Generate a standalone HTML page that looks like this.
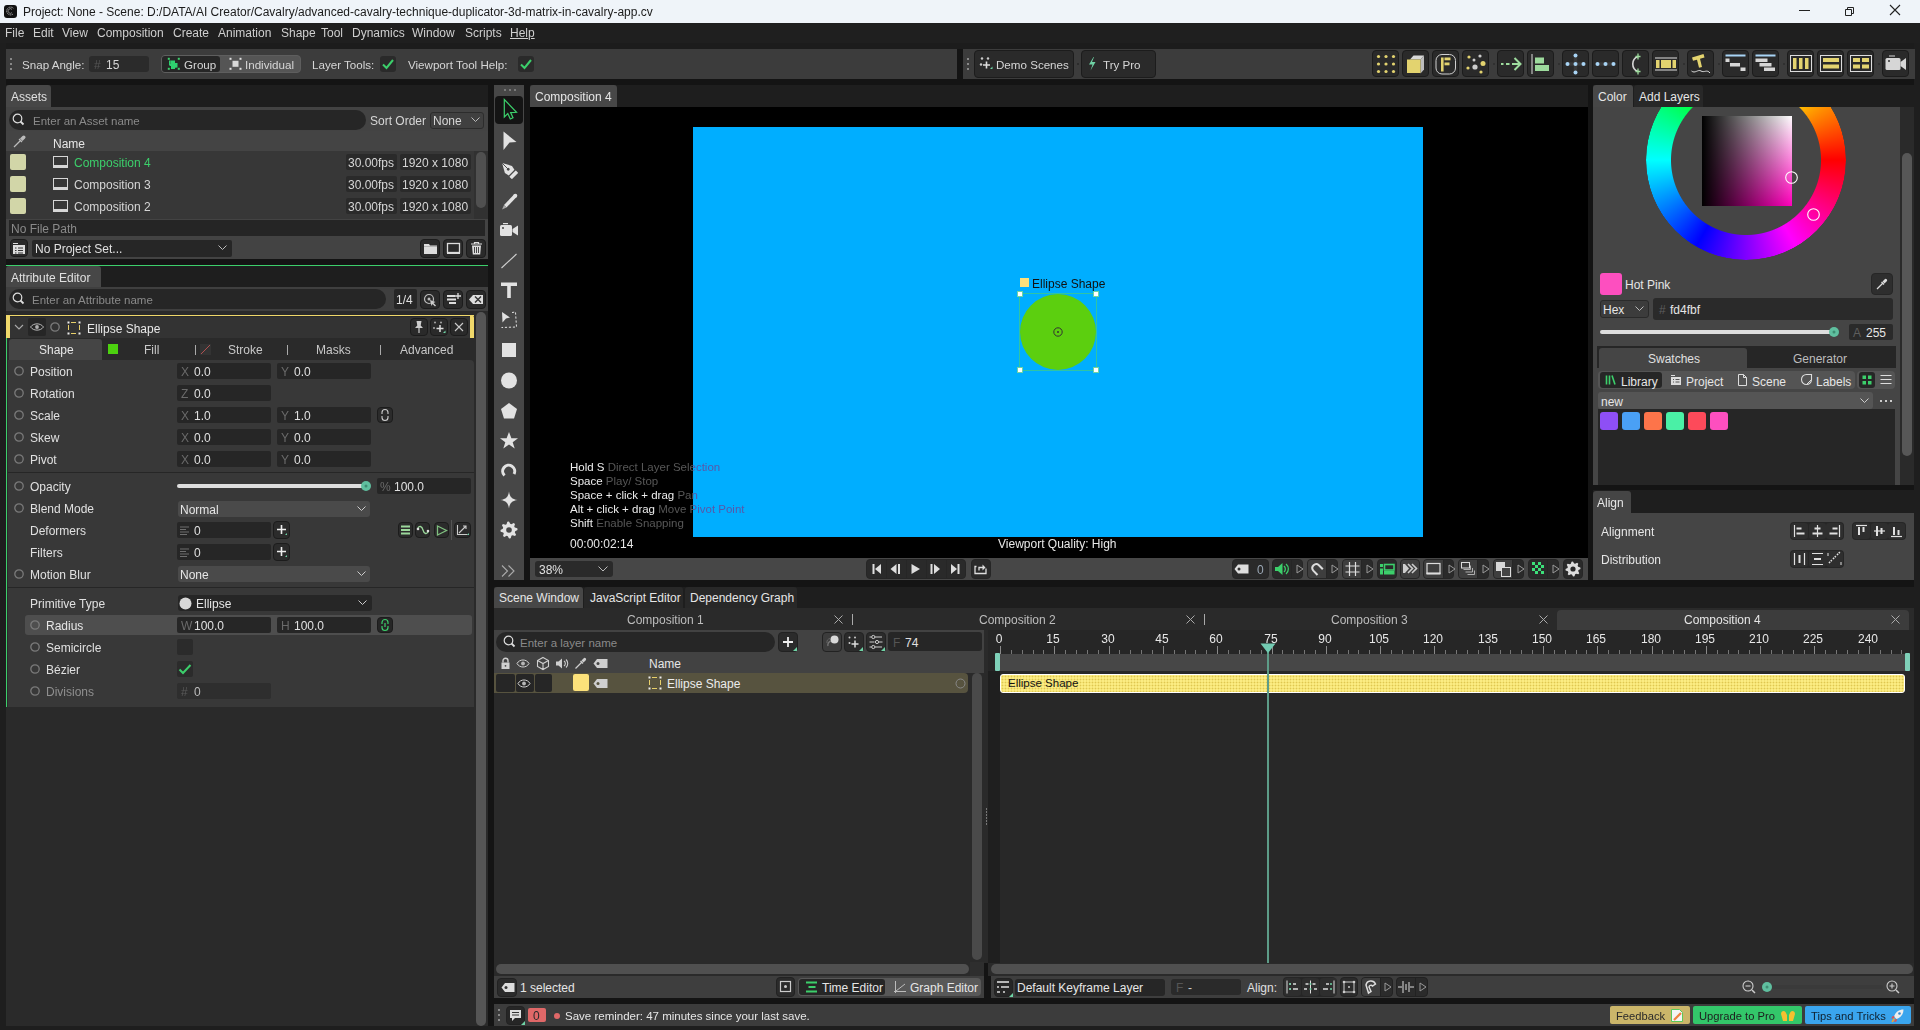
<!DOCTYPE html>
<html><head><meta charset="utf-8">
<style>
*{box-sizing:border-box;margin:0;padding:0}
html,body{width:1920px;height:1030px;overflow:hidden;background:#141414;font-family:"Liberation Sans",sans-serif;font-size:12px;color:#d6d6d6}
.a{position:absolute}
.t{position:absolute;white-space:nowrap;line-height:14px;margin-top:1px}
.fld{position:absolute;background:#262626;border-radius:3px}
.btn{position:absolute;background:#2a2a2a;border:1px solid #1c1c1c;border-radius:4px}
svg{position:absolute;overflow:visible}
</style></head><body>

<!-- TITLE BAR -->
<div class="a" style="left:0;top:0;width:1920px;height:23px;background:#eff4f9"></div>
<div class="a" style="left:3.5px;top:4.5px;width:13px;height:13px;background:#111;border-radius:3px"></div>
<svg style="left:4px;top:5px" width="12" height="12"><path d="M9.3 3.2 A3.9 3.9 0 1 0 9.3 8.8" fill="none" stroke="#bbb" stroke-width="0.9" stroke-dasharray="1.2 0.6"/><path d="M8 4.4 A2.3 2.3 0 1 0 8 7.6" fill="none" stroke="#999" stroke-width="0.8"/></svg>
<div class="t" style="left:23px;top:4px;color:#1b1b1b;font-size:12px">Project: None - Scene: D:/DATA/AI Creator/Cavalry/advanced-cavalry-technique-duplicator-3d-matrix-in-cavalry-app.cv</div>
<div class="a" style="left:1799px;top:10px;width:11px;height:1px;background:#222"></div>
<svg style="left:1843px;top:5px" width="12" height="12"><path d="M2.5 4.5h6v6h-6z M4.5 4.5v-2h6v6h-2" fill="none" stroke="#222" stroke-width="1"/></svg>
<svg style="left:1889px;top:4px" width="12" height="12"><path d="M1 1L11 11M11 1L1 11" stroke="#222" stroke-width="1.1"/></svg>

<!-- MENU BAR -->
<!-- SIDESTRIPS --><div class="a" style="left:0;top:1026px;width:1920px;height:4px;background:#1e1e1e"></div><div class="a" style="left:0;top:43px;width:1920px;height:6px;background:#1c1c1c"></div><div class="a" style="left:0;top:43px;width:6px;height:987px;background:#1e1e1e"></div><div class="a" style="left:1914px;top:43px;width:6px;height:987px;background:#1e1e1e"></div>
<div class="a" style="left:0;top:23px;width:1920px;height:20px;background:#1f1f1f"></div>
<div class="t" style="top:25px;left:5px;color:#cfcfcf">File</div>
<div class="t" style="top:25px;left:33px;color:#cfcfcf">Edit</div>
<div class="t" style="top:25px;left:62px;color:#cfcfcf">View</div>
<div class="t" style="top:25px;left:97px;color:#cfcfcf">Composition</div>
<div class="t" style="top:25px;left:173px;color:#cfcfcf">Create</div>
<div class="t" style="top:25px;left:218px;color:#cfcfcf">Animation</div>
<div class="t" style="top:25px;left:281px;color:#cfcfcf">Shape</div>
<div class="t" style="top:25px;left:321px;color:#cfcfcf">Tool</div>
<div class="t" style="top:25px;left:352px;color:#cfcfcf">Dynamics</div>
<div class="t" style="top:25px;left:412px;color:#cfcfcf">Window</div>
<div class="t" style="top:25px;left:465px;color:#cfcfcf">Scripts</div>
<div class="t" style="top:25px;left:510px;color:#cfcfcf;text-decoration:underline">Help</div>

<!-- TOOLBAR 1 -->
<div class="a" style="left:6px;top:49px;width:951px;height:30px;background:#3c3c3c"></div>
<div class="a" style="left:10px;top:58px;width:2px;height:2px;background:#888"></div>
<div class="a" style="left:10px;top:63px;width:2px;height:2px;background:#888"></div>
<div class="a" style="left:10px;top:68px;width:2px;height:2px;background:#888"></div>
<div class="t" style="left:22px;top:57px;font-size:11.6px">Snap Angle:</div>
<div class="fld" style="left:89px;top:56px;width:60px;height:16px;background:#2b2b2b"></div>
<div class="t" style="left:94px;top:57px;color:#555">#</div>
<div class="t" style="left:106px;top:57px">15</div>
<div class="a" style="left:161px;top:55px;width:140px;height:18px;background:#555555;border-radius:4px;border:1px solid #5e5e5e"></div>
<div class="a" style="left:162px;top:56px;width:58px;height:16px;background:#262626;border-radius:3px"></div>
<svg style="left:166px;top:56px" width="16" height="16"><rect x="1.8" y="1.8" width="2" height="2" fill="#3ccf6b"/><rect x="11.8" y="1.8" width="2" height="2" fill="#3ccf6b"/><rect x="1.8" y="11.8" width="2" height="2" fill="#3ccf6b"/><rect x="11.8" y="11.8" width="2" height="2" fill="#3ccf6b"/><path d="M4.5 4.5h4.5v2.5h1.5v4.5h-1.5v1.5h-4v-3h-1.5v-2h1z" fill="#2fd070"/><path d="M3 4.5h1.5v4.5h-1.5z M9 7h2.5v4.5H9z" fill="#2fd070"/></svg>
<div class="t" style="left:184px;top:57px;font-size:11.6px">Group</div>
<svg style="left:228px;top:56px" width="16" height="16"><rect x="1.5" y="1.8" width="2" height="2" fill="#e0e0e0"/><rect x="11.5" y="1.8" width="2" height="2" fill="#e0e0e0"/><rect x="1.5" y="11.8" width="2" height="2" fill="#e0e0e0"/><rect x="11.5" y="11.8" width="2" height="2" fill="#e0e0e0"/><rect x="4.5" y="4.8" width="6" height="6" fill="#d8d8d8"/></svg>
<div class="t" style="left:245px;top:57px;font-size:11.6px">Individual</div>
<div class="t" style="left:312px;top:57px;font-size:11.6px">Layer Tools:</div>
<div class="a" style="left:380px;top:56px;width:16px;height:16px;background:#2a2a2a;border-radius:3px"></div>
<svg style="left:380px;top:56px" width="16" height="16"><path d="M3 8.5L6.5 12L13 4" fill="none" stroke="#3ccf6b" stroke-width="2"/></svg>
<div class="t" style="left:408px;top:57px;font-size:11.6px">Viewport Tool Help:</div>
<div class="a" style="left:518px;top:56px;width:16px;height:16px;background:#2a2a2a;border-radius:3px"></div>
<svg style="left:518px;top:56px" width="16" height="16"><path d="M3 8.5L6.5 12L13 4" fill="none" stroke="#3ccf6b" stroke-width="2"/></svg>

<!-- TOOLBAR 2 -->
<div class="a" style="left:963px;top:49px;width:952px;height:30px;background:#3c3c3c"></div>
<div class="btn" style="left:1372px;top:50px;width:27px;height:27px"></div><svg style="left:1372px;top:50px" width="27" height="27"><circle cx="6.5" cy="6.5" r="1.6" fill="#e3d36f"/><circle cx="6.5" cy="14" r="1.6" fill="#e3d36f"/><circle cx="6.5" cy="21.5" r="1.6" fill="#e3d36f"/><circle cx="14" cy="6.5" r="1.6" fill="#e3d36f"/><circle cx="14" cy="14" r="1.6" fill="#e3d36f"/><circle cx="14" cy="21.5" r="1.6" fill="#e3d36f"/><circle cx="21.5" cy="6.5" r="1.6" fill="#e3d36f"/><circle cx="21.5" cy="14" r="1.6" fill="#e3d36f"/><circle cx="21.5" cy="21.5" r="1.6" fill="#e3d36f"/></svg>
<div class="btn" style="left:1402px;top:50px;width:27px;height:27px"></div><svg style="left:1402px;top:50px" width="27" height="27"><path d="M8 9.5 L11.5 5.5 L22 5.5 L18.5 9.5Z" fill="#d8d8d8"/><path d="M18.5 9.5 L22 5.5 L22 19.5 L18.5 23.5Z" fill="#bdbdbd"/><rect x="5" y="9.5" width="13.5" height="13.5" fill="#e3d36f"/></svg>
<div class="btn" style="left:1432px;top:50px;width:27px;height:27px"></div><svg style="left:1432px;top:50px" width="27" height="27"><rect x="4" y="4.5" width="19.5" height="19.5" rx="6" fill="none" stroke="#d0d0d0" stroke-width="1"/><rect x="9" y="7.5" width="2.6" height="14" fill="#e3d36f"/><rect x="12.5" y="7.5" width="6" height="2.8" fill="#e3d36f"/><rect x="12.5" y="12.5" width="5" height="2.8" fill="#e3d36f"/></svg>
<div class="btn" style="left:1462px;top:50px;width:27px;height:27px"></div><svg style="left:1462px;top:50px" width="27" height="27"><circle cx="7" cy="7" r="1.6" fill="#e3d36f"/><circle cx="18" cy="6" r="1.6" fill="#ccc"/><circle cx="12" cy="10" r="1.5" fill="#ccc"/><circle cx="21" cy="13.5" r="2.5" fill="#e3d36f"/><circle cx="13" cy="17" r="2.6" fill="#ccc"/><circle cx="6" cy="18" r="1.6" fill="#e3d36f"/><circle cx="19" cy="22" r="1.6" fill="#e3d36f"/></svg>
<div class="btn" style="left:1497px;top:50px;width:27px;height:27px"></div><svg style="left:1497px;top:50px" width="27" height="27"><path d="M4 14h2.5 M9 14h3.5 M15 14h8" stroke="#9ddb9d" stroke-width="2"/><path d="M17.5 8 L23.5 14 L17.5 20" fill="none" stroke="#9ddb9d" stroke-width="2"/></svg>
<div class="btn" style="left:1527px;top:50px;width:27px;height:27px"></div><svg style="left:1527px;top:50px" width="27" height="27"><rect x="4.5" y="4" width="1" height="20" fill="#ddd"/><rect x="8" y="7.5" width="9" height="6" fill="#9ddb9d"/><rect x="8" y="15" width="14" height="6" fill="#9ddb9d"/></svg>
<div class="btn" style="left:1562px;top:50px;width:27px;height:27px"></div><svg style="left:1562px;top:50px" width="27" height="27"><path d="M13.5 6 V22 M5.5 14 H21.5" stroke="#3a3a3a" stroke-width="3.5"/><circle cx="13.5" cy="5.5" r="2" fill="#a8d4f5"/><circle cx="5.5" cy="14" r="2" fill="#a8d4f5"/><circle cx="13.5" cy="14" r="2" fill="#a8d4f5"/><circle cx="21.5" cy="14" r="2" fill="#a8d4f5"/><circle cx="13.5" cy="22.5" r="2" fill="#a8d4f5"/></svg>
<div class="btn" style="left:1592px;top:50px;width:27px;height:27px"></div><svg style="left:1592px;top:50px" width="27" height="27"><path d="M5.5 14 H21.5" stroke="#3a3a3a" stroke-width="3.5"/><circle cx="5.5" cy="14" r="2" fill="#a8d4f5"/><circle cx="13.5" cy="14" r="2" fill="#a8d4f5"/><circle cx="21.5" cy="14" r="2" fill="#a8d4f5"/></svg>
<div class="btn" style="left:1622px;top:50px;width:27px;height:27px"></div><svg style="left:1622px;top:50px" width="27" height="27"><path d="M16 6.5 A8 8 0 0 0 16 21.5" fill="none" stroke="#d6d6d6" stroke-width="1.6"/><path d="M16 3.5v6 M13.5 6.5h5 M16 18.5v6 M13.5 21.5h5" stroke="#9ddb9d" stroke-width="1.3"/></svg>
<div class="btn" style="left:1652px;top:50px;width:27px;height:27px"></div><svg style="left:1652px;top:50px" width="27" height="27"><rect x="3" y="7.5" width="22" height="1" fill="#ddd"/><rect x="3" y="19.5" width="22" height="1" fill="#ddd"/><rect x="4" y="10" width="3.5" height="8" fill="#e3d36f"/><rect x="9" y="10" width="10" height="8" fill="#e3d36f"/><rect x="20.5" y="10" width="3.5" height="8" fill="#e3d36f"/></svg>
<div class="btn" style="left:1687px;top:50px;width:27px;height:27px"></div><svg style="left:1687px;top:50px" width="27" height="27"><path d="M5 7.5 L16.5 4 L17.5 7.5 L13 8.8 L15 17 L12 17.8 L10 9.7 L6 10.8Z" fill="#e3d36f"/><path d="M4.5 21 C8 24 11 19 14 21 S20 19 23 23" fill="none" stroke="#ddd" stroke-width="1"/></svg>
<div class="btn" style="left:1722px;top:50px;width:27px;height:27px"></div><svg style="left:1722px;top:50px" width="27" height="27"><rect x="3.5" y="4.5" width="20" height="2" fill="#a8d4f5"/><rect x="3.5" y="8.5" width="4" height="3.5" fill="#d6d6d6"/><rect x="8" y="13" width="10" height="3.5" fill="#d6d6d6"/><rect x="18.5" y="17.5" width="5" height="3.5" fill="#d6d6d6"/></svg>
<div class="btn" style="left:1752px;top:50px;width:27px;height:27px"></div><svg style="left:1752px;top:50px" width="27" height="27"><rect x="3.5" y="4.5" width="20" height="2" fill="#a8d4f5"/><rect x="3.5" y="8.5" width="12" height="3.5" fill="#d6d6d6"/><rect x="7.5" y="13" width="12" height="3.5" fill="#d6d6d6"/><rect x="12" y="17.5" width="11" height="3.5" fill="#d6d6d6"/></svg>
<div class="btn" style="left:1787px;top:50px;width:27px;height:27px"></div><svg style="left:1787px;top:50px" width="27" height="27"><rect x="3.5" y="5.5" width="21" height="16" fill="none" stroke="#ddd" stroke-width="1"/><rect x="6" y="8" width="3.5" height="11" fill="#e3d36f"/><rect x="12" y="8" width="3.5" height="11" fill="#e3d36f"/><rect x="18" y="8" width="3.5" height="11" fill="#e3d36f"/></svg>
<div class="btn" style="left:1817px;top:50px;width:27px;height:27px"></div><svg style="left:1817px;top:50px" width="27" height="27"><rect x="3.5" y="5.5" width="21" height="16" fill="none" stroke="#ddd" stroke-width="1"/><rect x="6" y="8" width="16" height="4" fill="#e3d36f"/><rect x="6" y="14.5" width="16" height="4" fill="#e3d36f"/></svg>
<div class="btn" style="left:1847px;top:50px;width:27px;height:27px"></div><svg style="left:1847px;top:50px" width="27" height="27"><rect x="3.5" y="5.5" width="21" height="16" fill="none" stroke="#ddd" stroke-width="1"/><rect x="6" y="8" width="7" height="4" fill="#e3d36f"/><rect x="15" y="8" width="7" height="4" fill="#e3d36f"/><rect x="6" y="14.5" width="7" height="4" fill="#e3d36f"/><rect x="15" y="14.5" width="7" height="4" fill="#e3d36f"/></svg>
<div class="btn" style="left:1882px;top:50px;width:27px;height:27px"></div><svg style="left:1882px;top:50px" width="27" height="27"><rect x="7" y="5.5" width="6" height="1" fill="#d6d6d6"/><rect x="3.5" y="8" width="15" height="12" rx="1.5" fill="#d6d6d6"/><circle cx="7" cy="11" r="1" fill="#333"/><path d="M18.5 12 L24 8 L24 20 L18.5 16Z" fill="#d6d6d6"/></svg>
<div class="a" style="left:1493px;top:63px;width:2px;height:2px;border-radius:1px;background:#2c2c2c"></div>
<div class="a" style="left:1558px;top:63px;width:2px;height:2px;border-radius:1px;background:#2c2c2c"></div>
<div class="a" style="left:1683px;top:63px;width:2px;height:2px;border-radius:1px;background:#2c2c2c"></div>
<div class="a" style="left:1718px;top:63px;width:2px;height:2px;border-radius:1px;background:#2c2c2c"></div>
<div class="a" style="left:1783px;top:63px;width:2px;height:2px;border-radius:1px;background:#2c2c2c"></div>
<div class="a" style="left:1878px;top:63px;width:2px;height:2px;border-radius:1px;background:#2c2c2c"></div>
<div class="a" style="left:967px;top:58px;width:2px;height:2px;background:#888"></div><div class="a" style="left:967px;top:63px;width:2px;height:2px;background:#888"></div><div class="a" style="left:967px;top:68px;width:2px;height:2px;background:#888"></div>
<div class="btn" style="left:974px;top:50px;width:100px;height:28px"></div>
<svg style="left:979px;top:56px" width="16" height="16"><circle cx="3" cy="2.5" r="1.2" fill="#ccc"/><circle cx="9" cy="2.5" r="1.2" fill="#ccc"/><circle cx="2" cy="8.5" r="1.2" fill="#ccc"/><path d="M7.5 5.5v7 M4 9h7" stroke="#ddd" stroke-width="1.6"/><path d="M11 13h2.5v-2.5z" fill="#6fd3a5"/></svg>
<div class="t" style="left:996px;top:57px;font-size:11.6px">Demo Scenes</div>
<div class="a" style="left:1077px;top:63px;width:2px;height:2px;background:#2c2c2c"></div>
<div class="btn" style="left:1081px;top:50px;width:75px;height:28px"></div>
<svg style="left:1087px;top:56px" width="12" height="16"><path d="M6.5 1 L2 8.5 L5.5 8.5 L3.5 14.5 L8.5 6 L5 6 L7 1Z" fill="#6fd3a5"/></svg>
<div class="t" style="left:1103px;top:57px;font-size:11.6px">Try Pro</div>



<!-- ASSETS PANEL -->
<div class="a" style="left:6px;top:85px;width:482px;height:22px;background:#1e1e1e"></div>
<div class="a" style="left:6px;top:85px;width:45px;height:22px;background:#474747;border-radius:3px 3px 0 0"></div>
<div class="t" style="left:11px;top:89px;color:#e0e0e0">Assets</div>
<div class="a" style="left:6px;top:107px;width:482px;height:152px;background:#434343"></div>
<div class="a" style="left:9px;top:110px;width:357px;height:20px;background:#262626;border-radius:10px"></div>
<svg style="left:12px;top:113px" width="14" height="14"><circle cx="5.5" cy="5.5" r="4.3" fill="none" stroke="#ddd" stroke-width="1.2"/><path d="M8.5 8.5L11.5 11.5" stroke="#ddd" stroke-width="1.8"/></svg>
<div class="t" style="left:33px;top:113px;color:#8a8a8a;font-size:11.5px">Enter an Asset name</div>
<div class="t" style="left:370px;top:113px;color:#d6d6d6">Sort Order</div>
<div class="a" style="left:430px;top:112px;width:54px;height:17px;background:#404040;border:1px solid #2c2c2c;border-radius:3px"></div>
<div class="t" style="left:433px;top:113px;color:#d6d6d6">None</div>
<svg style="left:471px;top:117px" width="9" height="6"><path d="M0.5 0.5L4.5 4.5L8.5 0.5" fill="none" stroke="#bbb" stroke-width="1"/></svg>
<div class="a" style="left:6px;top:131px;width:482px;height:20px;background:#444444"></div>
<svg style="left:13px;top:135px" width="13" height="13"><path d="M1 12L8 5" stroke="#bbb" stroke-width="1.3"/><path d="M7 3.5L9.5 1 A1.6 1.6 0 0 1 12 3.5L9.5 6Z" fill="#bbb"/><path d="M6 4L9 7" stroke="#bbb" stroke-width="1.3"/></svg>
<div class="t" style="left:53px;top:136px;color:#e6e6e6">Name</div>
<div class="a" style="left:6px;top:151px;width:482px;height:68px;background:#373737"></div>
<div class="a" style="left:474px;top:151px;width:14px;height:68px;background:#313131"></div>
<div class="a" style="left:476px;top:152px;width:10px;height:56px;background:#505050;border-radius:5px"></div>

<div class="a" style="left:10px;top:154px;width:16px;height:16px;background:#d2d6a8;border-radius:2px"></div>
<svg style="left:53px;top:156px" width="15" height="12"><rect x="0.5" y="0.5" width="14" height="10" fill="none" stroke="#d6d6d6" stroke-width="1"/><rect x="0" y="9" width="15" height="3" fill="#d6d6d6"/></svg>
<div class="t" style="left:74px;top:155px;color:#3ccf6b">Composition 4</div>
<div class="a" style="left:346px;top:154px;width:51px;height:16px;background:#2a2a2a;border-radius:2px"></div>
<div class="t" style="left:348px;top:155px">30.00fps</div>
<div class="a" style="left:400px;top:154px;width:71px;height:16px;background:#2a2a2a;border-radius:2px"></div>
<div class="t" style="left:402px;top:155px">1920 x 1080</div>

<div class="a" style="left:10px;top:176px;width:16px;height:16px;background:#d2d6a8;border-radius:2px"></div>
<svg style="left:53px;top:178px" width="15" height="12"><rect x="0.5" y="0.5" width="14" height="10" fill="none" stroke="#d6d6d6" stroke-width="1"/><rect x="0" y="9" width="15" height="3" fill="#d6d6d6"/></svg>
<div class="t" style="left:74px;top:177px">Composition 3</div>
<div class="a" style="left:346px;top:176px;width:51px;height:16px;background:#2a2a2a;border-radius:2px"></div>
<div class="t" style="left:348px;top:177px">30.00fps</div>
<div class="a" style="left:400px;top:176px;width:71px;height:16px;background:#2a2a2a;border-radius:2px"></div>
<div class="t" style="left:402px;top:177px">1920 x 1080</div>

<div class="a" style="left:10px;top:198px;width:16px;height:16px;background:#d2d6a8;border-radius:2px"></div>
<svg style="left:53px;top:200px" width="15" height="12"><rect x="0.5" y="0.5" width="14" height="10" fill="none" stroke="#d6d6d6" stroke-width="1"/><rect x="0" y="9" width="15" height="3" fill="#d6d6d6"/></svg>
<div class="t" style="left:74px;top:199px">Composition 2</div>
<div class="a" style="left:346px;top:198px;width:51px;height:16px;background:#2a2a2a;border-radius:2px"></div>
<div class="t" style="left:348px;top:199px">30.00fps</div>
<div class="a" style="left:400px;top:198px;width:71px;height:16px;background:#2a2a2a;border-radius:2px"></div>
<div class="t" style="left:402px;top:199px">1920 x 1080</div>

<div class="a" style="left:9px;top:220px;width:476px;height:16px;background:#252525"></div>
<div class="t" style="left:11px;top:221px;color:#8a8a8a">No File Path</div>
<div class="btn" style="left:10px;top:239px;width:18px;height:18px"></div>
<svg style="left:12px;top:242px" width="14" height="13"><path d="M1 1.5h5" stroke="#ddd" stroke-width="1"/><rect x="1" y="3" width="12" height="9" fill="#ddd"/><path d="M3 6h1.5M6 6h5M3 8.5h1.5M6 8.5h5M3 11h1.5M6 11h5" stroke="#333" stroke-width="1"/></svg>
<div class="a" style="left:32px;top:240px;width:200px;height:17px;background:#262626;border-radius:2px"></div>
<div class="t" style="left:35px;top:241px;color:#e0e0e0">No Project Set...</div>
<svg style="left:218px;top:245px" width="9" height="6"><path d="M0.5 0.5L4.5 4.5L8.5 0.5" fill="none" stroke="#bbb" stroke-width="1"/></svg>
<div class="btn" style="left:420px;top:239px;width:20px;height:19px"></div>
<svg style="left:423px;top:242px" width="15" height="13"><path d="M1 2h5l1 1.5h7v8.5H1z" fill="#ddd"/><path d="M1 4.5h13" stroke="#aaa" stroke-width="0.8"/></svg>
<div class="btn" style="left:443px;top:239px;width:20px;height:19px"></div>
<svg style="left:446px;top:242px" width="15" height="13"><rect x="1.5" y="1.5" width="12" height="9" fill="none" stroke="#ddd" stroke-width="1.3"/><rect x="1" y="10" width="13" height="2" fill="#ddd"/></svg>
<div class="btn" style="left:466px;top:239px;width:20px;height:19px"></div>
<svg style="left:470px;top:241px" width="13" height="15"><path d="M1 3h11M4.5 3V1.5h4V3" fill="none" stroke="#ddd" stroke-width="1.2"/><path d="M2 4.5h9l-0.8 9H2.8z" fill="#ddd"/><path d="M4.5 6v6M6.5 6v6M8.5 6v6" stroke="#333" stroke-width="0.9"/></svg>

<!-- ATTRIBUTE EDITOR -->
<div class="a" style="left:6px;top:265px;width:482px;height:1px;background:#3ccf6b;"></div>
<div class="a" style="left:6px;top:266px;width:482px;height:21px;background:#1e1e1e;"></div>
<div class="a" style="left:6px;top:266px;width:95px;height:21px;background:#474747;border-radius:3px 3px 0 0"></div>
<div class="t" style="left:11px;top:270px;color:#e0e0e0;">Attribute Editor</div>
<div class="a" style="left:6px;top:287px;width:482px;height:24px;background:#3f3f3f;"></div>
<div class="a" style="left:9px;top:289px;width:377px;height:20px;background:#262626;border-radius:10px"></div>
<svg style="left:12px;top:292px" width="14" height="14"><circle cx="5.5" cy="5.5" r="4.3" fill="none" stroke="#ddd" stroke-width="1.2"/><path d="M8.5 8.5L11.5 11.5" stroke="#ddd" stroke-width="1.8"/></svg>
<div class="t" style="left:32px;top:292px;color:#8a8a8a;font-size:11.5px">Enter an Attribute name</div>
<div class="a" style="left:394px;top:289px;width:23px;height:20px;background:#262626;border-radius:2px"></div>
<div class="t" style="left:396px;top:292px;color:#e0e0e0;">1/4</div>
<div class="btn" style="left:420px;top:290px;width:20px;height:19px"></div>
<svg style="left:423px;top:293px" width="15" height="14"><circle cx="6" cy="6" r="4.5" fill="none" stroke="#bbb" stroke-width="1.2"/><circle cx="6" cy="6" r="1.5" fill="#bbb"/><path d="M7 7l5.5 2-2 1 2.5 2.5-1 1-2.5-2.5-1 2z" fill="#ccc"/></svg>
<div class="btn" style="left:443px;top:290px;width:20px;height:19px"></div>
<svg style="left:446px;top:292px" width="15" height="14"><path d="M1 4h8M1 7.5h9M3 11h7" stroke="#ddd" stroke-width="2"/><path d="M12 1v6M9 4h6" stroke="#ddd" stroke-width="1.3"/></svg>
<div class="btn" style="left:466px;top:290px;width:20px;height:19px"></div>
<svg style="left:468px;top:293px" width="16" height="13"><path d="M1 6.5L5 2H15V11H5Z" fill="#ddd"/><path d="M7 3.5l6 6M13 3.5l-6 6" stroke="#333" stroke-width="1.4"/></svg>
<div class="a" style="left:6px;top:311px;width:482px;height:715px;background:#2a2a2a;"></div>
<div class="a" style="left:476px;top:312px;width:10px;height:714px;background:#555555;border-radius:5px"></div>
<div class="a" style="left:6px;top:338px;width:1.3px;height:369px;background:#3ccf6b;"></div>
<div class="a" style="left:6px;top:315px;width:468px;height:1px;background:#f0d86a;"></div>
<div class="a" style="left:6px;top:317px;width:468px;height:21px;background:#333333;"></div>
<div class="a" style="left:6px;top:315px;width:4px;height:23px;background:#f0d86a;"></div>
<div class="a" style="left:470px;top:315px;width:4px;height:23px;background:#f0d86a;border-radius:0 3px 0 0"></div>
<svg style="left:14px;top:322px" width="10" height="10"><path d="M1 3L5 7L9 3" fill="none" stroke="#aaa" stroke-width="1.1"/></svg>
<div class="a" style="left:28px;top:318px;width:18px;height:18px;background:#262626;border-radius:2px"></div>
<svg style="left:29px;top:321px" width="16" height="12"><path d="M1.5 6C4.5 1.8 11.5 1.8 14.5 6C11.5 10.2 4.5 10.2 1.5 6Z" fill="none" stroke="#b8b8b8" stroke-width="1"/><circle cx="8" cy="6" r="1.9" fill="#b0b0b0"/></svg>
<svg style="left:50px;top:322px" width="10" height="10"><circle cx="5" cy="5" r="4.2" fill="none" stroke="#7a7a7a" stroke-width="1.3"/></svg>
<svg style="left:67px;top:321px" width="14" height="14"><path d="M4 1.5h5M4 12.5h5M1.5 4v5M12.5 4v5" stroke="#e8d06a" stroke-width="1"/><rect x="0.5" y="0.5" width="2" height="2" fill="#eee"/><rect x="11.5" y="0.5" width="2" height="2" fill="#eee"/><rect x="0.5" y="11.5" width="2" height="2" fill="#eee"/><rect x="11.5" y="11.5" width="2" height="2" fill="#eee"/></svg>
<div class="t" style="left:87px;top:321px;color:#e8e8e8;">Ellipse Shape</div>
<div class="btn" style="left:410px;top:318px;width:18px;height:18px"></div>
<svg style="left:413px;top:320px" width="12" height="14"><path d="M3.5 1h5l-0.8 4.5 2.3 2.5H2l2.3-2.5z" fill="#ccc"/><path d="M6 8v5" stroke="#ccc" stroke-width="1.2"/></svg>
<div class="btn" style="left:430px;top:318px;width:18px;height:18px"></div>
<svg style="left:432px;top:320px" width="14" height="14"><circle cx="3" cy="2.5" r="1" fill="#aaa"/><circle cx="9" cy="2.5" r="1" fill="#aaa"/><circle cx="2" cy="8" r="1" fill="#aaa"/><path d="M8 5v7M4.5 8.5h7" stroke="#ddd" stroke-width="1.5"/><path d="M11 13h2.5v-2.5z" fill="#6fd3a5"/></svg>
<div class="btn" style="left:450px;top:318px;width:18px;height:18px"></div>
<svg style="left:454px;top:322px" width="10" height="10"><path d="M1 1L9 9M9 1L1 9" stroke="#ccc" stroke-width="1.1"/></svg>
<div class="a" style="left:8px;top:338px;width:466px;height:22px;background:#2a2a2a;"></div>
<div class="a" style="left:9px;top:339px;width:93px;height:21px;background:#454545;border-radius:3px 3px 0 0"></div>
<div class="t" style="left:39px;top:342px;color:#e6e6e6;">Shape</div>
<div class="a" style="left:108px;top:344px;width:10px;height:10px;background:#4cd10f;"></div>
<div class="t" style="left:144px;top:342px;color:#c8c8c8;">Fill</div>
<div class="a" style="left:195px;top:345px;width:1px;height:10px;background:#aaa;"></div>
<div class="a" style="left:200px;top:344px;width:11px;height:11px;background:#333;"></div>
<svg style="left:200px;top:344px" width="11" height="11"><path d="M1 10L10 1" stroke="#b05050" stroke-width="1"/></svg>
<div class="t" style="left:228px;top:342px;color:#c8c8c8;">Stroke</div>
<div class="a" style="left:287px;top:345px;width:1px;height:10px;background:#aaa;"></div>
<div class="t" style="left:316px;top:342px;color:#c8c8c8;">Masks</div>
<div class="a" style="left:380px;top:345px;width:1px;height:10px;background:#aaa;"></div>
<div class="t" style="left:400px;top:342px;color:#c8c8c8;">Advanced</div>
<div class="a" style="left:8px;top:360px;width:466px;height:347px;background:#383838;border-radius:0 4px 0 0"></div>
<svg style="left:14px;top:366px" width="10" height="10"><circle cx="5" cy="5" r="4.2" fill="none" stroke="#7a7a7a" stroke-width="1.3"/></svg>
<div class="t" style="left:30px;top:364px;color:#e0e0e0;">Position</div>
<div class="a" style="left:177px;top:363px;width:94px;height:16px;background:#262626;border-radius:2px"></div>
<div class="t" style="left:181px;top:364px;color:#6a6a6a;">X</div>
<div class="t" style="left:194px;top:364px;color:#e0e0e0;">0.0</div>
<div class="a" style="left:277px;top:363px;width:94px;height:16px;background:#262626;border-radius:2px"></div>
<div class="t" style="left:281px;top:364px;color:#6a6a6a;">Y</div>
<div class="t" style="left:294px;top:364px;color:#e0e0e0;">0.0</div>
<svg style="left:14px;top:388px" width="10" height="10"><circle cx="5" cy="5" r="4.2" fill="none" stroke="#7a7a7a" stroke-width="1.3"/></svg>
<div class="t" style="left:30px;top:386px;color:#e0e0e0;">Rotation</div>
<div class="a" style="left:177px;top:385px;width:94px;height:16px;background:#262626;border-radius:2px"></div>
<div class="t" style="left:181px;top:386px;color:#6a6a6a;">Z</div>
<div class="t" style="left:194px;top:386px;color:#e0e0e0;">0.0</div>
<svg style="left:14px;top:410px" width="10" height="10"><circle cx="5" cy="5" r="4.2" fill="none" stroke="#7a7a7a" stroke-width="1.3"/></svg>
<div class="t" style="left:30px;top:408px;color:#e0e0e0;">Scale</div>
<div class="a" style="left:177px;top:407px;width:94px;height:16px;background:#262626;border-radius:2px"></div>
<div class="t" style="left:181px;top:408px;color:#6a6a6a;">X</div>
<div class="t" style="left:194px;top:408px;color:#e0e0e0;">1.0</div>
<div class="a" style="left:277px;top:407px;width:94px;height:16px;background:#262626;border-radius:2px"></div>
<div class="t" style="left:281px;top:408px;color:#6a6a6a;">Y</div>
<div class="t" style="left:294px;top:408px;color:#e0e0e0;">1.0</div>
<svg style="left:14px;top:432px" width="10" height="10"><circle cx="5" cy="5" r="4.2" fill="none" stroke="#7a7a7a" stroke-width="1.3"/></svg>
<div class="t" style="left:30px;top:430px;color:#e0e0e0;">Skew</div>
<div class="a" style="left:177px;top:429px;width:94px;height:16px;background:#262626;border-radius:2px"></div>
<div class="t" style="left:181px;top:430px;color:#6a6a6a;">X</div>
<div class="t" style="left:194px;top:430px;color:#e0e0e0;">0.0</div>
<div class="a" style="left:277px;top:429px;width:94px;height:16px;background:#262626;border-radius:2px"></div>
<div class="t" style="left:281px;top:430px;color:#6a6a6a;">Y</div>
<div class="t" style="left:294px;top:430px;color:#e0e0e0;">0.0</div>
<svg style="left:14px;top:454px" width="10" height="10"><circle cx="5" cy="5" r="4.2" fill="none" stroke="#7a7a7a" stroke-width="1.3"/></svg>
<div class="t" style="left:30px;top:452px;color:#e0e0e0;">Pivot</div>
<div class="a" style="left:177px;top:451px;width:94px;height:16px;background:#262626;border-radius:2px"></div>
<div class="t" style="left:181px;top:452px;color:#6a6a6a;">X</div>
<div class="t" style="left:194px;top:452px;color:#e0e0e0;">0.0</div>
<div class="a" style="left:277px;top:451px;width:94px;height:16px;background:#262626;border-radius:2px"></div>
<div class="t" style="left:281px;top:452px;color:#6a6a6a;">Y</div>
<div class="t" style="left:294px;top:452px;color:#e0e0e0;">0.0</div>
<div class="btn" style="left:377px;top:407px;width:16px;height:16px;background:#2b2b2b"></div>
<svg style="left:380px;top:409px" width="10" height="12"><path d="M2 5V3.5A3 3 0 0 1 8 3.5V5 M2 7V8.5A3 3 0 0 0 8 8.5V7" fill="none" stroke="#ccc" stroke-width="1.1"/></svg>
<div class="a" style="left:8px;top:472px;width:466px;height:1px;background:#262626;"></div>
<svg style="left:14px;top:481px" width="10" height="10"><circle cx="5" cy="5" r="4.2" fill="none" stroke="#7a7a7a" stroke-width="1.3"/></svg>
<div class="t" style="left:30px;top:479px;color:#e0e0e0;">Opacity</div>
<div class="a" style="left:177px;top:484px;width:190px;height:4px;background:#dedede;border-radius:2px"></div>
<svg style="left:360px;top:480px" width="12" height="12"><circle cx="6" cy="6" r="5" fill="#5fbf9f"/><circle cx="6" cy="6" r="1.5" fill="#3e8d73"/></svg>
<div class="a" style="left:377px;top:478px;width:94px;height:16px;background:#262626;border-radius:2px"></div>
<div class="t" style="left:380px;top:479px;color:#6a6a6a;">%</div>
<div class="t" style="left:394px;top:479px;color:#e0e0e0;">100.0</div>
<svg style="left:14px;top:503px" width="10" height="10"><circle cx="5" cy="5" r="4.2" fill="none" stroke="#7a7a7a" stroke-width="1.3"/></svg>
<div class="t" style="left:30px;top:501px;color:#e0e0e0;">Blend Mode</div>
<div class="a" style="left:178px;top:501px;width:192px;height:16px;background:#4a4a4a;border-radius:3px"></div>
<div class="t" style="left:180px;top:502px;color:#e6e6e6;">Normal</div>
<svg style="left:357px;top:506px" width="9" height="6"><path d="M0.5 0.5L4.5 4.5L8.5 0.5" fill="none" stroke="#ccc" stroke-width="1"/></svg>
<div class="t" style="left:30px;top:523px;color:#e0e0e0;">Deformers</div>
<div class="a" style="left:177px;top:522px;width:94px;height:16px;background:#262626;border-radius:2px"></div>
<svg style="left:180px;top:526px" width="10" height="9"><path d="M0 1h9M0 3.5h6M0 6h9M0 8.5h7" stroke="#777" stroke-width="0.9"/></svg>
<div class="t" style="left:194px;top:523px;color:#e0e0e0;">0</div>
<div class="btn" style="left:273px;top:521px;width:17px;height:18px;background:#2b2b2b"></div>
<svg style="left:276px;top:524px" width="11" height="11"><path d="M5.5 1v9M1 5.5h9" stroke="#eee" stroke-width="1.6"/><path d="M9 11h2v-2z" fill="#6fd3a5"/></svg>
<div class="btn" style="left:398px;top:522px;width:15px;height:16px;background:#2b2b2b"></div>
<svg style="left:400px;top:525px" width="11" height="10"><path d="M1 1.5h9M1 5h9M1 8.5h9" stroke="#9bd89b" stroke-width="1.8"/></svg>
<div class="btn" style="left:415px;top:522px;width:15px;height:16px;background:#2b2b2b"></div>
<svg style="left:416px;top:524px" width="14" height="12"><path d="M1.5 5C3 1 6 2 7 6S11 11 12.5 7" fill="none" stroke="#9bd89b" stroke-width="1.3"/><circle cx="2" cy="5" r="1.3" fill="#ddd"/><circle cx="12" cy="7" r="1.3" fill="#ddd"/></svg>
<div class="btn" style="left:434px;top:522px;width:15px;height:16px;background:#2b2b2b"></div>
<svg style="left:436px;top:525px" width="12" height="11"><path d="M1.5 1L10.5 5.5 1.5 10z" fill="none" stroke="#7fbf7f" stroke-width="1.3"/></svg>
<div class="a" style="left:451px;top:520px;width:1px;height:20px;background:#555;"></div>
<div class="btn" style="left:454px;top:522px;width:17px;height:16px;background:#2b2b2b"></div>
<svg style="left:456px;top:524px" width="13" height="12"><path d="M1.5 1v9.5h10" fill="none" stroke="#ccc" stroke-width="1.1"/><path d="M3 9L10 2M7 2h3v3" fill="none" stroke="#ccc" stroke-width="1.1"/><path d="M11 11h2v-2z" fill="#6fd3a5"/></svg>
<div class="t" style="left:30px;top:545px;color:#e0e0e0;">Filters</div>
<div class="a" style="left:177px;top:544px;width:94px;height:16px;background:#262626;border-radius:2px"></div>
<svg style="left:180px;top:548px" width="10" height="9"><path d="M0 1h9M0 3.5h6M0 6h9M0 8.5h7" stroke="#777" stroke-width="0.9"/></svg>
<div class="t" style="left:194px;top:545px;color:#e0e0e0;">0</div>
<div class="btn" style="left:273px;top:543px;width:17px;height:18px;background:#2b2b2b"></div>
<svg style="left:276px;top:546px" width="11" height="11"><path d="M5.5 1v9M1 5.5h9" stroke="#eee" stroke-width="1.6"/><path d="M9 11h2v-2z" fill="#6fd3a5"/></svg>
<svg style="left:14px;top:569px" width="10" height="10"><circle cx="5" cy="5" r="4.2" fill="none" stroke="#7a7a7a" stroke-width="1.3"/></svg>
<div class="t" style="left:30px;top:567px;color:#e0e0e0;">Motion Blur</div>
<div class="a" style="left:178px;top:566px;width:192px;height:16px;background:#4a4a4a;border-radius:3px"></div>
<div class="t" style="left:180px;top:567px;color:#e6e6e6;">None</div>
<svg style="left:357px;top:571px" width="9" height="6"><path d="M0.5 0.5L4.5 4.5L8.5 0.5" fill="none" stroke="#ccc" stroke-width="1"/></svg>
<div class="a" style="left:8px;top:587px;width:466px;height:1px;background:#262626;"></div>
<div class="t" style="left:30px;top:596px;color:#e0e0e0;">Primitive Type</div>
<div class="a" style="left:178px;top:595px;width:194px;height:16px;background:#262626;border-radius:3px"></div>
<svg style="left:179px;top:597px" width="13" height="13"><circle cx="6.5" cy="6.5" r="6" fill="#d8d8d8"/></svg>
<div class="t" style="left:196px;top:596px;color:#e6e6e6;">Ellipse</div>
<svg style="left:358px;top:600px" width="9" height="6"><path d="M0.5 0.5L4.5 4.5L8.5 0.5" fill="none" stroke="#ccc" stroke-width="1"/></svg>
<div class="a" style="left:25px;top:615px;width:447px;height:20px;background:#4e4e4e;border-radius:3px"></div>
<svg style="left:30px;top:620px" width="10" height="10"><circle cx="5" cy="5" r="4.2" fill="none" stroke="#7a7a7a" stroke-width="1.3"/></svg>
<div class="t" style="left:46px;top:618px;color:#e6e6e6;">Radius</div>
<div class="a" style="left:177px;top:617px;width:94px;height:16px;background:#262626;border-radius:2px"></div>
<div class="t" style="left:181px;top:618px;color:#6a6a6a;">W</div>
<div class="t" style="left:194px;top:618px;color:#e0e0e0;">100.0</div>
<div class="a" style="left:277px;top:617px;width:94px;height:16px;background:#262626;border-radius:2px"></div>
<div class="t" style="left:281px;top:618px;color:#6a6a6a;">H</div>
<div class="t" style="left:294px;top:618px;color:#e0e0e0;">100.0</div>
<div class="btn" style="left:377px;top:617px;width:16px;height:16px;background:#262626"></div>
<svg style="left:380px;top:619px" width="10" height="12"><path d="M2 5V3.5A3 3 0 0 1 8 3.5V5 M2 7V8.5A3 3 0 0 0 8 8.5V7 M5 4v4" fill="none" stroke="#3ccf6b" stroke-width="1.2"/></svg>
<svg style="left:30px;top:642px" width="10" height="10"><circle cx="5" cy="5" r="4.2" fill="none" stroke="#7a7a7a" stroke-width="1.3"/></svg>
<div class="t" style="left:46px;top:640px;color:#e0e0e0;">Semicircle</div>
<div class="a" style="left:177px;top:639px;width:16px;height:16px;background:#2b2b2b;border-radius:2px"></div>
<svg style="left:30px;top:664px" width="10" height="10"><circle cx="5" cy="5" r="4.2" fill="none" stroke="#7a7a7a" stroke-width="1.3"/></svg>
<div class="t" style="left:46px;top:662px;color:#e0e0e0;">B&eacute;zier</div>
<div class="a" style="left:177px;top:661px;width:16px;height:16px;background:#2b2b2b;border-radius:2px"></div>
<svg style="left:177px;top:661px" width="16" height="16"><path d="M2.5 8.5L6 12L13.5 4" fill="none" stroke="#3ccf6b" stroke-width="2"/></svg>
<svg style="left:30px;top:686px" width="10" height="10"><circle cx="5" cy="5" r="4.2" fill="none" stroke="#7a7a7a" stroke-width="1.3"/></svg>
<div class="t" style="left:46px;top:684px;color:#8f8f8f;">Divisions</div>
<div class="a" style="left:177px;top:683px;width:94px;height:16px;background:#2e2e2e;border-radius:2px"></div>
<div class="t" style="left:181px;top:684px;color:#5a5a5a;">#</div>
<div class="t" style="left:194px;top:684px;color:#bdbdbd;">0</div>
<!-- TOOLS -->
<div class="a" style="left:494px;top:85px;width:30px;height:495px;background:#474747;"></div>
<div class="a" style="left:504px;top:89px;width:2px;height:2px;background:#8a8a8a;border-radius:1px"></div>
<div class="a" style="left:509px;top:89px;width:2px;height:2px;background:#8a8a8a;border-radius:1px"></div>
<div class="a" style="left:514px;top:89px;width:2px;height:2px;background:#8a8a8a;border-radius:1px"></div>
<div class="a" style="left:495px;top:96px;width:28px;height:28px;background:#141414;border-radius:4px"></div>
<svg style="left:499px;top:97px" width="22" height="24"><path d="M5.3 2.5 L5.3 20 L8.8 16.6 L11.3 22 L14 20.8 L11.6 15.6 L17.5 15.3 Z" fill="none" stroke="#3ccf6b" stroke-width="1.2" stroke-linejoin="miter"/></svg>
<svg style="left:499px;top:130px" width="20" height="22"><path d="M4.5 1.5 L17.5 12 L10.5 12.5 L4.5 20 Z" fill="#e2e2e2"/></svg>
<svg style="left:499px;top:159px" width="20" height="22"><g transform="translate(10.5,11.5) rotate(-45)"><path d="M0 -10.5 L5 -1.5 L4 3 L-4 3 L-5 -1.5 Z" fill="#e2e2e2"/><rect x="-4.5" y="4.3" width="9" height="3.6" rx="0.6" fill="#e2e2e2"/><path d="M0 -10.5 V-2.5" stroke="#474747" stroke-width="0.9"/><circle cx="0" cy="-1.8" r="1.4" fill="#474747"/></g></svg>
<svg style="left:499px;top:190px" width="20" height="22"><path d="M5 15 L15 4.5 L17.5 7 L7.5 17.5 Z" fill="#e2e2e2"/><path d="M5 15 L7.5 17.5 L3 19.5 Z" fill="#aaa"/><circle cx="16.3" cy="5.7" r="2" fill="#e2e2e2"/></svg>
<svg style="left:499px;top:222px" width="20" height="16"><rect x="4" y="1" width="5" height="1.2" fill="#e2e2e2"/><rect x="1" y="3" width="12" height="11" rx="1.5" fill="#e2e2e2"/><circle cx="4" cy="6" r="0.9" fill="#333"/><path d="M13.5 7 L19 3.5 L19 13.5 L13.5 10 Z" fill="#e2e2e2"/></svg>
<svg style="left:499px;top:252px" width="20" height="18"><path d="M2.5 16 L17.5 2" stroke="#cfcfcf" stroke-width="1.1"/></svg>
<svg style="left:499px;top:281px" width="20" height="18"><path d="M2 1.5 H18 V5 H11.8 V17 H8.2 V5 H2 Z" fill="#e2e2e2"/></svg>
<svg style="left:499px;top:310px" width="20" height="20"><path d="M3 2 L11 7.5 L7 8.5 L3.5 12.5 Z" fill="#e2e2e2"/><path d="M13 2.5 L16.5 2 L17.5 17 L2.5 17.5" fill="none" stroke="#e2e2e2" stroke-width="1" stroke-dasharray="2.2 1.8"/></svg>
<div class="a" style="left:502px;top:343px;width:14px;height:14px;background:#e2e2e2;"></div>
<svg style="left:500px;top:372px" width="18" height="18"><circle cx="9" cy="8.5" r="8" fill="#e2e2e2"/></svg>
<svg style="left:500px;top:402px" width="18" height="18"><path d="M9 1 L17 7 L14 16.5 L4 16.5 L1 7 Z" fill="#e2e2e2"/></svg>
<svg style="left:499px;top:431px" width="20" height="18"><path d="M10 1 L12.4 7.2 L19 7.2 L13.7 11.2 L15.7 17.5 L10 13.6 L4.3 17.5 L6.3 11.2 L1 7.2 L7.6 7.2 Z" fill="#e2e2e2"/></svg>
<svg style="left:500px;top:462px" width="18" height="18"><path d="M4.5 13.5 A6 6 0 1 1 14 12" fill="none" stroke="#e2e2e2" stroke-width="3"/></svg>
<svg style="left:499px;top:491px" width="20" height="18"><path d="M10 0.5 C10.8 6 13 8.2 18.5 9 C13 9.8 10.8 12 10 17.5 C9.2 12 7 9.8 1.5 9 C7 8.2 9.2 6 10 0.5 Z" fill="#e2e2e2"/></svg>
<svg style="left:500px;top:521px" width="18" height="18"><path d="M17.33 7.31 L17.50 8.97 L15.18 10.21 L14.83 11.39 L16.08 13.70 L15.03 14.99 L12.52 14.23 L11.43 14.81 L10.69 17.33 L9.03 17.50 L7.79 15.18 L6.61 14.83 L4.30 16.08 L3.01 15.03 L3.77 12.52 L3.19 11.43 L0.67 10.69 L0.50 9.03 L2.82 7.79 L3.17 6.61 L1.92 4.30 L2.97 3.01 L5.48 3.77 L6.57 3.19 L7.31 0.67 L8.97 0.50 L10.21 2.82 L11.39 3.17 L13.70 1.92 L14.99 2.97 L14.23 5.48 L14.81 6.57Z" fill="#e2e2e2"/><circle cx="9" cy="9" r="2.8" fill="#474747"/></svg>
<svg style="left:500px;top:564px" width="18" height="14"><path d="M2 1.5 L7.5 7 L2 12.5 M8.5 1.5 L14 7 L8.5 12.5" fill="none" stroke="#aaa" stroke-width="1.1"/></svg>
<!-- VIEWPORT -->
<div class="a" style="left:530px;top:85px;width:1058px;height:22px;background:#1e1e1e;"></div>
<div class="a" style="left:530px;top:85px;width:87px;height:22px;background:#474747;border-radius:3px 3px 0 0"></div>
<div class="t" style="left:535px;top:89px;color:#e6e6e6;">Composition 4</div>
<div class="a" style="left:530px;top:107px;width:1058px;height:451px;background:#000;"></div>
<div class="a" style="left:693px;top:127px;width:730px;height:410px;background:#00aeff;"></div>
<div class="a" style="left:1020px;top:294px;width:76px;height:76px;background:#5ccf0f;border-radius:50%"></div>
<div class="a" style="left:1019px;top:293px;width:78px;height:78px;background:transparent;border:1.6px solid #30c4a4"></div>
<div class="a" style="left:1017px;top:291px;width:6px;height:6px;background:#fff;border:1px solid #6fd3a5"></div>
<div class="a" style="left:1093px;top:291px;width:6px;height:6px;background:#fff;border:1px solid #6fd3a5"></div>
<div class="a" style="left:1017px;top:367px;width:6px;height:6px;background:#fff;border:1px solid #6fd3a5"></div>
<div class="a" style="left:1093px;top:367px;width:6px;height:6px;background:#fff;border:1px solid #6fd3a5"></div>
<svg style="left:1052px;top:326px" width="12" height="12"><circle cx="6" cy="6" r="4.2" fill="none" stroke="#333" stroke-width="1"/><circle cx="6" cy="6" r="1" fill="#333"/></svg>
<div class="a" style="left:1020px;top:278px;width:9px;height:9px;background:#ffe07a;"></div>
<div class="t" style="left:1032px;top:276px;color:#111;font-size:12px">Ellipse Shape</div>
<div class="t" style="left:570px;top:459px;font-size:11.5px;color:#ececec">Hold S <span style="color:#575757;mix-blend-mode:difference">Direct Layer Selection</span></div>
<div class="t" style="left:570px;top:473px;font-size:11.5px;color:#ececec">Space <span style="color:#575757;mix-blend-mode:difference">Play/ Stop</span></div>
<div class="t" style="left:570px;top:487px;font-size:11.5px;color:#ececec">Space + click + drag <span style="color:#575757;mix-blend-mode:difference">Pan</span></div>
<div class="t" style="left:570px;top:501px;font-size:11.5px;color:#ececec">Alt + click + drag <span style="color:#575757;mix-blend-mode:difference">Move Pivot Point</span></div>
<div class="t" style="left:570px;top:515px;font-size:11.5px;color:#ececec">Shift <span style="color:#575757;mix-blend-mode:difference">Enable Snapping</span></div>
<div class="t" style="left:570px;top:536px;color:#e8e8e8;">00:00:02:14</div>
<div class="t" style="left:998px;top:536px;color:#e8e8e8;">Viewport Quality: High</div>
<div class="a" style="left:530px;top:558px;width:1058px;height:22px;background:#474747;"></div>
<div class="a" style="left:535px;top:561px;width:78px;height:16px;background:#2a2a2a;border-radius:3px"></div>
<div class="t" style="left:539px;top:562px;color:#e0e0e0;">38%</div>
<svg style="left:598px;top:566px" width="10" height="6"><path d="M0.5 0.5L5 5L9.5 0.5" fill="none" stroke="#bbb" stroke-width="1"/></svg>
<div class="a" style="left:866px;top:559px;width:100px;height:20px;background:#2a2a2a;border:1px solid #262626;border-radius:4px;"></div>
<div class="a" style="left:886px;top:560px;width:1px;height:18px;background:#262626;"></div>
<div class="a" style="left:906px;top:560px;width:1px;height:18px;background:#262626;"></div>
<div class="a" style="left:926px;top:560px;width:1px;height:18px;background:#262626;"></div>
<div class="a" style="left:946px;top:560px;width:1px;height:18px;background:#262626;"></div>
<svg style="left:866px;top:560px" width="100" height="18"><path d="M7.5 4v10" stroke="#dedede" stroke-width="2"/><path d="M15 4v10L9 9z" fill="#dedede"/><path d="M24.5 9L30.5 4v10z" fill="#dedede"/><path d="M33 4v10" stroke="#dedede" stroke-width="2"/><path d="M45.5 4L54 9 45.5 14z" fill="#dedede"/><path d="M65.5 4v10" stroke="#dedede" stroke-width="2"/><path d="M68 4l6 5-6 5z" fill="#dedede"/><path d="M85 4v10L91 9z" fill="#dedede"/><path d="M92.5 4v10" stroke="#dedede" stroke-width="2"/></svg>
<div class="a" style="left:971px;top:559px;width:20px;height:20px;background:#2a2a2a;border:1px solid #262626;border-radius:4px;"></div>
<svg style="left:974px;top:562px" width="14" height="13"><path d="M2.5 4.5H1V11.5H12V6.5" fill="none" stroke="#dedede" stroke-width="1.3"/><path d="M5 8.5V5.5H9.5" fill="none" stroke="#dedede" stroke-width="1.3"/><path d="M8.5 2.5L11.5 5.5L8.5 8.5z" fill="#dedede"/></svg>
<div class="a" style="left:1232px;top:559px;width:37px;height:20px;background:#2a2a2a;border:1px solid #262626;border-radius:4px;"></div>
<svg style="left:1234px;top:563px" width="16" height="12"><path d="M0.5 6L4 1.5H14.5V10.5H4Z" fill="#dedede"/><circle cx="5" cy="6" r="1.5" fill="#333"/></svg>
<div class="t" style="left:1257px;top:562px;color:#9aa7b5;">0</div>
<div class="a" style="left:1272px;top:559px;width:31px;height:20px;background:#2a2a2a;border:1px solid #262626;border-radius:4px;"></div>
<div class="a" style="left:1273px;top:560px;width:18px;height:18px;background:#2a2a2a;border-radius:3px 0 0 3px"></div>
<div class="a" style="left:1291px;top:560px;width:1px;height:18px;background:#262626;"></div>
<svg style="left:1273px;top:560px" width="19" height="18"><path d="M2 7H5L9.5 3v12L5 11H2z" fill="#3ccf6b"/><path d="M11 6A4 4 0 0 1 11 12M13 4A6.5 6.5 0 0 1 13 14" fill="none" stroke="#3ccf6b" stroke-width="1.3"/></svg>
<svg style="left:1296px;top:564px" width="8" height="10"><path d="M1 1L7 5L1 9z" fill="none" stroke="#999" stroke-width="1"/></svg>
<div class="a" style="left:1307px;top:559px;width:31px;height:20px;background:#2a2a2a;border:1px solid #262626;border-radius:4px;"></div>
<div class="a" style="left:1308px;top:560px;width:18px;height:18px;background:#3e3e3e;border-radius:3px 0 0 3px"></div>
<div class="a" style="left:1326px;top:560px;width:1px;height:18px;background:#262626;"></div>
<svg style="left:1308px;top:560px" width="19" height="18"><path d="M9.5 15L5.3 10.6A3.9 3.9 0 0 1 10.9 5.2L14.8 9.2" fill="none" stroke="#dcdcdc" stroke-width="2"/></svg>
<svg style="left:1331px;top:564px" width="8" height="10"><path d="M1 1L7 5L1 9z" fill="none" stroke="#999" stroke-width="1"/></svg>
<div class="a" style="left:1342px;top:559px;width:31px;height:20px;background:#2a2a2a;border:1px solid #262626;border-radius:4px;"></div>
<div class="a" style="left:1343px;top:560px;width:18px;height:18px;background:#3e3e3e;border-radius:3px 0 0 3px"></div>
<div class="a" style="left:1361px;top:560px;width:1px;height:18px;background:#262626;"></div>
<svg style="left:1343px;top:560px" width="19" height="18"><path d="M6.5 2v14M12.5 2v14M2.5 6h14M2.5 12h14" stroke="#ddd" stroke-width="1.2"/></svg>
<svg style="left:1366px;top:564px" width="8" height="10"><path d="M1 1L7 5L1 9z" fill="none" stroke="#999" stroke-width="1"/></svg>
<div class="a" style="left:1377px;top:559px;width:20px;height:20px;background:#2a2a2a;border:1px solid #262626;border-radius:4px;"></div>
<svg style="left:1378px;top:561px" width="18" height="16"><rect x="2" y="3" width="3" height="3" fill="#3ccf6b"/><rect x="2" y="7.5" width="3" height="6" fill="#3ccf6b"/><rect x="6.5" y="3.5" width="9.5" height="5.5" fill="none" stroke="#3ccf6b" stroke-width="1.6"/><rect x="6" y="10" width="10.5" height="3.5" fill="#3ccf6b"/></svg>
<div class="a" style="left:1400px;top:559px;width:20px;height:20px;background:#3e3e3e;border:1px solid #262626;border-radius:4px;"></div>
<svg style="left:1402px;top:563px" width="16" height="11"><path d="M1 1h2l4 4.5L3 10H1z" fill="#ccc"/><path d="M6 1l4.5 4.5L6 10M10 1l4.5 4.5L10 10" fill="none" stroke="#ccc" stroke-width="1.6"/></svg>
<div class="a" style="left:1423px;top:559px;width:31px;height:20px;background:#2a2a2a;border:1px solid #262626;border-radius:4px;"></div>
<div class="a" style="left:1424px;top:560px;width:19px;height:18px;background:#3e3e3e;border-radius:3px 0 0 3px"></div>
<div class="a" style="left:1443px;top:560px;width:1px;height:18px;background:#262626;"></div>
<svg style="left:1424px;top:560px" width="20" height="18"><rect x="3" y="3.5" width="13" height="10" fill="none" stroke="#ddd" stroke-width="1.2"/><rect x="2.5" y="12.5" width="14" height="2" fill="#ddd"/></svg>
<svg style="left:1448px;top:564px" width="8" height="10"><path d="M1 1L7 5L1 9z" fill="none" stroke="#999" stroke-width="1"/></svg>
<div class="a" style="left:1458px;top:559px;width:31px;height:20px;background:#2a2a2a;border:1px solid #262626;border-radius:4px;"></div>
<div class="a" style="left:1459px;top:560px;width:18px;height:18px;background:#3e3e3e;border-radius:3px 0 0 3px"></div>
<div class="a" style="left:1477px;top:560px;width:1px;height:18px;background:#262626;"></div>
<svg style="left:1459px;top:560px" width="19" height="18"><rect x="2.5" y="2.5" width="8" height="5.5" fill="none" stroke="#ddd" stroke-width="1"/><path d="M11.5 5.5v4h-7M13.5 8v4h-7M15.5 10.5v4h-7" fill="none" stroke="#bbb" stroke-width="0.9"/></svg>
<svg style="left:1482px;top:564px" width="8" height="10"><path d="M1 1L7 5L1 9z" fill="none" stroke="#999" stroke-width="1"/></svg>
<div class="a" style="left:1493px;top:559px;width:31px;height:20px;background:#2a2a2a;border:1px solid #262626;border-radius:4px;"></div>
<div class="a" style="left:1494px;top:560px;width:18px;height:18px;background:#3e3e3e;border-radius:3px 0 0 3px"></div>
<div class="a" style="left:1512px;top:560px;width:1px;height:18px;background:#262626;"></div>
<svg style="left:1494px;top:560px" width="19" height="18"><rect x="2" y="2" width="9" height="9" fill="#d8d8d8"/><rect x="7.5" y="7.5" width="9" height="9" fill="#444" stroke="#ddd" stroke-width="1"/></svg>
<svg style="left:1517px;top:564px" width="8" height="10"><path d="M1 1L7 5L1 9z" fill="none" stroke="#999" stroke-width="1"/></svg>
<div class="a" style="left:1528px;top:559px;width:31px;height:20px;background:#2a2a2a;border:1px solid #262626;border-radius:4px;"></div>
<div class="a" style="left:1529px;top:560px;width:18px;height:18px;background:#2a2a2a;border-radius:3px 0 0 3px"></div>
<div class="a" style="left:1547px;top:560px;width:1px;height:18px;background:#262626;"></div>
<svg style="left:1529px;top:560px" width="19" height="18"><rect x="3" y="2" width="3" height="3" fill="#3ce07a"/><rect x="3" y="8" width="3" height="3" fill="#3ce07a"/><rect x="6" y="5" width="3" height="3" fill="#3ce07a"/><rect x="6" y="11" width="3" height="3" fill="#3ce07a"/><rect x="9" y="2" width="3" height="3" fill="#3ce07a"/><rect x="9" y="8" width="3" height="3" fill="#3ce07a"/><rect x="12" y="5" width="3" height="3" fill="#3ce07a"/><rect x="12" y="11" width="3" height="3" fill="#3ce07a"/></svg>
<svg style="left:1552px;top:564px" width="8" height="10"><path d="M1 1L7 5L1 9z" fill="none" stroke="#999" stroke-width="1"/></svg>
<div class="a" style="left:1563px;top:559px;width:20px;height:20px;background:#2a2a2a;border:1px solid #262626;border-radius:4px;"></div>
<svg style="left:1564px;top:560px" width="18" height="18"><path d="M16.35 7.51 L16.50 8.97 L14.50 10.07 L14.18 11.12 L15.25 13.14 L14.32 14.28 L12.13 13.64 L11.16 14.17 L10.49 16.35 L9.03 16.50 L7.93 14.50 L6.88 14.18 L4.86 15.25 L3.72 14.32 L4.36 12.13 L3.83 11.16 L1.65 10.49 L1.50 9.03 L3.50 7.93 L3.82 6.88 L2.75 4.86 L3.68 3.72 L5.87 4.36 L6.84 3.83 L7.51 1.65 L8.97 1.50 L10.07 3.50 L11.12 3.82 L13.14 2.75 L14.28 3.68 L13.64 5.87 L14.17 6.84Z" fill="#ddd"/><circle cx="9" cy="9" r="2.6" fill="#2a2a2a"/></svg>
<!-- COLOR PANEL -->
<div class="a" style="left:1593px;top:85px;width:321px;height:22px;background:#1e1e1e;"></div>
<div class="a" style="left:1593px;top:85px;width:40px;height:22px;background:#474747;border-radius:3px 3px 0 0"></div>
<div class="t" style="left:1598px;top:89px;color:#e6e6e6;">Color</div>
<div class="a" style="left:1634px;top:85px;width:69px;height:22px;background:#282828;border-radius:3px 3px 0 0"></div>
<div class="t" style="left:1639px;top:89px;color:#e6e6e6;">Add Layers</div>
<div class="a" style="left:1593px;top:107px;width:321px;height:378px;background:#454545;overflow:hidden">
<div class="a" style="left:52.9px;top:-47.4px;width:200px;height:200px;border-radius:50%;background:conic-gradient(hsl(90,100%,50%) 0deg,hsl(75,100%,50%) 15deg,hsl(60,100%,50%) 30deg,hsl(45,100%,50%) 45deg,hsl(30,100%,50%) 60deg,hsl(15,100%,50%) 75deg,hsl(0,100%,50%) 90deg,hsl(345,100%,50%) 105deg,hsl(330,100%,50%) 120deg,hsl(315,100%,50%) 135deg,hsl(300,100%,50%) 150deg,hsl(285,100%,50%) 165deg,hsl(270,100%,50%) 180deg,hsl(255,100%,50%) 195deg,hsl(240,100%,50%) 210deg,hsl(225,100%,50%) 225deg,hsl(210,100%,50%) 240deg,hsl(195,100%,50%) 255deg,hsl(180,100%,50%) 270deg,hsl(165,100%,50%) 285deg,hsl(150,100%,50%) 300deg,hsl(135,100%,50%) 315deg,hsl(120,100%,50%) 330deg,hsl(105,100%,50%) 345deg,hsl(90,100%,50%) 360deg);-webkit-mask:radial-gradient(circle, transparent 74.5px, #000 75.5px, #000 99.5px, transparent 100.5px);mask:radial-gradient(circle, transparent 74.5px, #000 75.5px, #000 99.5px, transparent 100.5px)"></div>
</div>
<div class="a" style="left:1702px;top:116px;width:90px;height:90px;background:linear-gradient(to right,#000,rgba(0,0,0,0)),linear-gradient(to bottom,#fff,#ff00bb)"></div>
<svg style="left:1785px;top:171px" width="14" height="14"><circle cx="6.5" cy="6.5" r="5.8" fill="none" stroke="#fff" stroke-width="1.1"/></svg>
<svg style="left:1807px;top:208px" width="14" height="14"><circle cx="6.5" cy="6.5" r="5.8" fill="none" stroke="#fff" stroke-width="1.1"/></svg>
<div class="a" style="left:1900px;top:107px;width:14px;height:378px;background:#2a2a2a;"></div>
<div class="a" style="left:1902px;top:153px;width:10px;height:303px;background:#575757;border-radius:5px"></div>
<div class="a" style="left:1600px;top:273px;width:22px;height:22px;background:#fd4fbf;border-radius:3px"></div>
<div class="t" style="left:1625px;top:277px;color:#e6e6e6;">Hot Pink</div>
<div class="a" style="left:1871px;top:273px;width:22px;height:22px;background:#2e2e2e;border:1px solid #262626;border-radius:4px;"></div>
<svg style="left:1875px;top:277px" width="14" height="14"><path d="M2 12L8 6" stroke="#ddd" stroke-width="1.2"/><path d="M7.5 4.5L10 2A1.5 1.5 0 0 1 12 4L9.5 6.5Z" fill="#ddd"/><path d="M6.5 5L9 7.5" stroke="#ddd" stroke-width="1.2"/></svg>
<div class="a" style="left:1600px;top:300px;width:49px;height:18px;background:#3c3c3c;border:1px solid #2a2a2a;border-radius:3px"></div>
<div class="t" style="left:1603px;top:302px;color:#e6e6e6;">Hex</div>
<svg style="left:1635px;top:306px" width="9" height="6"><path d="M0.5 0.5L4.5 4.5L8.5 0.5" fill="none" stroke="#bbb" stroke-width="1"/></svg>
<div class="a" style="left:1653px;top:298px;width:240px;height:22px;background:#2a2a2a;border-radius:3px"></div>
<div class="t" style="left:1659px;top:302px;color:#5e5e5e;">#</div>
<div class="t" style="left:1670px;top:302px;color:#e6e6e6;">fd4fbf</div>
<div class="a" style="left:1600px;top:330px;width:236px;height:4px;background:#dedede;border-radius:2px"></div>
<svg style="left:1828px;top:326px" width="12" height="12"><circle cx="6" cy="6" r="5" fill="#5fbf9f"/><circle cx="6" cy="6" r="1.5" fill="#3e8d73"/></svg>
<div class="a" style="left:1849px;top:324px;width:44px;height:16px;background:#2a2a2a;border-radius:2px"></div>
<div class="t" style="left:1853px;top:325px;color:#5e5e5e;">A</div>
<div class="t" style="left:1866px;top:325px;color:#e6e6e6;">255</div>
<div class="a" style="left:1597px;top:346px;width:299px;height:22px;background:#262626;"></div>
<div class="a" style="left:1599px;top:348px;width:148px;height:20px;background:#454545;border-radius:3px 3px 0 0"></div>
<div class="t" style="left:1648px;top:351px;color:#e0e0e0;">Swatches</div>
<div class="t" style="left:1793px;top:351px;color:#bdbdbd;">Generator</div>
<div class="a" style="left:1598px;top:371px;width:257px;height:18px;background:#545454;border-radius:4px"></div>
<div class="a" style="left:1600px;top:372px;width:62px;height:16px;background:#262626;border-radius:3px"></div>
<svg style="left:1605px;top:374px" width="13" height="12"><path d="M1.5 1.5v9M4.5 1.5v9M7 1.5l3 9" stroke="#3ccf6b" stroke-width="1.6"/></svg>
<div class="t" style="left:1621px;top:374px;color:#e6e6e6;">Library</div>
<svg style="left:1670px;top:374px" width="12" height="12"><path d="M1 1.5h4" stroke="#ddd" stroke-width="1"/><rect x="1" y="3" width="10" height="8" fill="#ddd"/><path d="M3 5.5h1M5.5 5.5h4M3 8h1M5.5 8h4" stroke="#555" stroke-width="1"/></svg>
<div class="t" style="left:1686px;top:374px;color:#e6e6e6;">Project</div>
<svg style="left:1737px;top:373px" width="11" height="14"><path d="M1.5 1.5h5l3 3v8h-8z M6.5 1.5v3h3" fill="none" stroke="#ddd" stroke-width="1"/></svg>
<div class="t" style="left:1752px;top:374px;color:#e6e6e6;">Scene</div>
<svg style="left:1800px;top:373px" width="13" height="13"><path d="M6.5 1.5A5 5 0 1 0 11.5 6.5V1.5Z" fill="none" stroke="#ddd" stroke-width="1.1"/><path d="M7 11L11 7" stroke="#ddd" stroke-width="1"/></svg>
<div class="t" style="left:1816px;top:374px;color:#e6e6e6;">Labels</div>
<div class="a" style="left:1857px;top:371px;width:38px;height:18px;background:#545454;border-radius:4px"></div>
<div class="a" style="left:1859px;top:372px;width:16px;height:16px;background:#262626;border-radius:3px"></div>
<svg style="left:1862px;top:375px" width="10" height="10"><rect x="0.5" y="0.5" width="3.5" height="3.5" fill="#3ccf6b"/><rect x="6" y="0.5" width="3.5" height="3.5" fill="#3ccf6b"/><rect x="0.5" y="6" width="3.5" height="3.5" fill="#3ccf6b"/><rect x="6" y="6" width="3.5" height="3.5" fill="#3ccf6b"/></svg>
<svg style="left:1880px;top:374px" width="13" height="11"><path d="M0.5 1.5h11M0.5 5.5h11M0.5 9.5h11" stroke="#ddd" stroke-width="1.1"/></svg>
<div class="a" style="left:1598px;top:392px;width:275px;height:17px;background:#555555;border-radius:3px"></div>
<div class="t" style="left:1601px;top:394px;color:#e6e6e6;">new</div>
<svg style="left:1860px;top:398px" width="9" height="6"><path d="M0.5 0.5L4.5 4.5L8.5 0.5" fill="none" stroke="#ccc" stroke-width="1"/></svg>
<div class="a" style="left:1880px;top:400px;width:2px;height:2px;background:#ccc;"></div>
<div class="a" style="left:1885px;top:400px;width:2px;height:2px;background:#ccc;"></div>
<div class="a" style="left:1890px;top:400px;width:2px;height:2px;background:#ccc;"></div>
<div class="a" style="left:1598px;top:409px;width:297px;height:76px;background:#262626;"></div>
<div class="a" style="left:1600px;top:412px;width:18px;height:18px;background:#8e4ff5;border-radius:3px"></div>
<div class="a" style="left:1622px;top:412px;width:18px;height:18px;background:#4aa0f5;border-radius:3px"></div>
<div class="a" style="left:1644px;top:412px;width:18px;height:18px;background:#fd744a;border-radius:3px"></div>
<div class="a" style="left:1666px;top:412px;width:18px;height:18px;background:#4af0a6;border-radius:3px"></div>
<div class="a" style="left:1688px;top:412px;width:18px;height:18px;background:#fd4a5a;border-radius:3px"></div>
<div class="a" style="left:1710px;top:412px;width:18px;height:18px;background:#fd4fbf;border-radius:3px"></div>
<!-- ALIGN -->
<div class="a" style="left:1593px;top:490px;width:321px;height:23px;background:#1e1e1e;"></div>
<div class="a" style="left:1593px;top:491px;width:38px;height:22px;background:#454545;border-radius:3px 3px 0 0"></div>
<div class="t" style="left:1597px;top:495px;color:#e6e6e6;">Align</div>
<div class="a" style="left:1593px;top:513px;width:321px;height:67px;background:#454545;"></div>
<div class="t" style="left:1601px;top:524px;color:#e6e6e6;">Alignment</div>
<div class="t" style="left:1601px;top:552px;color:#e6e6e6;">Distribution</div>
<div class="a" style="left:1790px;top:522px;width:54px;height:18px;background:#262626;border-radius:4px"></div>
<div class="a" style="left:1791.0px;top:523px;width:17px;height:16px;background:#2e2e2e;border-radius:3px"></div>
<svg style="left:1791.0px;top:522px" width="17" height="18"><path d="M3.5 3v12" stroke="#e0e0e0" stroke-width="1.2"/><path d="M5.5 6.5h5M5.5 11.5h8" stroke="#e0e0e0" stroke-width="2"/></svg>
<div class="a" style="left:1808.5px;top:523px;width:17px;height:16px;background:#2e2e2e;border-radius:3px"></div>
<svg style="left:1808.5px;top:522px" width="17" height="18"><path d="M8.5 3v12" stroke="#e0e0e0" stroke-width="1.2"/><path d="M5.5 6.5h6M3.5 11.5h10" stroke="#e0e0e0" stroke-width="2"/></svg>
<div class="a" style="left:1826.0px;top:523px;width:17px;height:16px;background:#2e2e2e;border-radius:3px"></div>
<svg style="left:1826.0px;top:522px" width="17" height="18"><path d="M13.5 3v12" stroke="#e0e0e0" stroke-width="1.2"/><path d="M6.5 6.5h5M3.5 11.5h8" stroke="#e0e0e0" stroke-width="2"/></svg>
<div class="a" style="left:1852px;top:522px;width:54px;height:18px;background:#262626;border-radius:4px"></div>
<div class="a" style="left:1853.0px;top:523px;width:17px;height:16px;background:#2e2e2e;border-radius:3px"></div>
<svg style="left:1853.0px;top:522px" width="17" height="18"><path d="M3 3.5h11" stroke="#e0e0e0" stroke-width="1.2"/><path d="M6 5v8M10.5 5v5" stroke="#e0e0e0" stroke-width="2"/></svg>
<div class="a" style="left:1870.5px;top:523px;width:17px;height:16px;background:#2e2e2e;border-radius:3px"></div>
<svg style="left:1870.5px;top:522px" width="17" height="18"><path d="M3 9h11" stroke="#e0e0e0" stroke-width="1.2"/><path d="M6 4v10M10.5 6v6" stroke="#e0e0e0" stroke-width="2"/></svg>
<div class="a" style="left:1888.0px;top:523px;width:17px;height:16px;background:#2e2e2e;border-radius:3px"></div>
<svg style="left:1888.0px;top:522px" width="17" height="18"><path d="M3 14.5h11" stroke="#e0e0e0" stroke-width="1.2"/><path d="M6 5v8M10.5 8v5" stroke="#e0e0e0" stroke-width="2"/></svg>
<div class="a" style="left:1790px;top:550px;width:54px;height:18px;background:#262626;border-radius:4px"></div>
<div class="a" style="left:1791.0px;top:551px;width:17px;height:16px;background:#2e2e2e;border-radius:3px"></div>
<svg style="left:1791.0px;top:550px" width="17" height="18"><path d="M3.5 3v12M13.5 3v12" stroke="#e0e0e0" stroke-width="1.2"/><path d="M8.5 5v8" stroke="#e0e0e0" stroke-width="2"/></svg>
<div class="a" style="left:1808.5px;top:551px;width:17px;height:16px;background:#2e2e2e;border-radius:3px"></div>
<svg style="left:1808.5px;top:550px" width="17" height="18"><path d="M3 3.5h11M3 14.5h11" stroke="#e0e0e0" stroke-width="1.2"/><path d="M5 9h7" stroke="#e0e0e0" stroke-width="2"/></svg>
<div class="a" style="left:1826.0px;top:551px;width:17px;height:16px;background:#2e2e2e;border-radius:3px"></div>
<svg style="left:1826.0px;top:550px" width="17" height="18"><path d="M3 13l3-3M7 9l3-3M11 5l3-3" stroke="#e0e0e0" stroke-width="1.6" stroke-dasharray="1.5 1"/><path d="M2 3v3M15 12v3" stroke="#e0e0e0" stroke-width="1"/></svg>
<!-- SCENE WINDOW -->
<div class="a" style="left:494px;top:587px;width:1420px;height:21px;background:#1e1e1e;"></div>
<div class="a" style="left:494px;top:587px;width:89px;height:21px;background:#474747;border-radius:3px 3px 0 0"></div>
<div class="t" style="left:499px;top:590px;color:#e6e6e6;">Scene Window</div>
<div class="a" style="left:584px;top:587px;width:99px;height:21px;background:#282828;border-radius:3px 3px 0 0"></div>
<div class="t" style="left:590px;top:590px;color:#e6e6e6;">JavaScript Editor</div>
<div class="a" style="left:685px;top:587px;width:112px;height:21px;background:#282828;border-radius:3px 3px 0 0"></div>
<div class="t" style="left:690px;top:590px;color:#e6e6e6;">Dependency Graph</div>
<div class="a" style="left:494px;top:608px;width:1420px;height:22px;background:#2a2a2a;"></div>
<div class="t" style="left:627px;top:612px;color:#bdbdbd;">Composition 1</div>
<svg style="left:834px;top:615px" width="9" height="9"><path d="M0.5 0.5L8.5 8.5M8.5 0.5L0.5 8.5" stroke="#aaa" stroke-width="1"/></svg>
<div class="a" style="left:852px;top:614px;width:1px;height:11px;background:#aaa;"></div>
<div class="t" style="left:979px;top:612px;color:#bdbdbd;">Composition 2</div>
<svg style="left:1186px;top:615px" width="9" height="9"><path d="M0.5 0.5L8.5 8.5M8.5 0.5L0.5 8.5" stroke="#aaa" stroke-width="1"/></svg>
<div class="a" style="left:1204px;top:614px;width:1px;height:11px;background:#aaa;"></div>
<div class="t" style="left:1331px;top:612px;color:#bdbdbd;">Composition 3</div>
<svg style="left:1539px;top:615px" width="9" height="9"><path d="M0.5 0.5L8.5 8.5M8.5 0.5L0.5 8.5" stroke="#aaa" stroke-width="1"/></svg>
<div class="a" style="left:1557px;top:610px;width:352px;height:20px;background:#3c3c3c;border-radius:4px 4px 0 0"></div>
<div class="t" style="left:1684px;top:612px;color:#e6e6e6;">Composition 4</div>
<svg style="left:1891px;top:615px" width="9" height="9"><path d="M0.5 0.5L8.5 8.5M8.5 0.5L0.5 8.5" stroke="#aaa" stroke-width="1"/></svg>
<div class="a" style="left:494px;top:630px;width:490px;height:43px;background:#424242;"></div>
<div class="a" style="left:496px;top:632px;width:279px;height:20px;background:#262626;border-radius:10px"></div>
<svg style="left:503px;top:635px" width="14" height="14"><circle cx="5.5" cy="5.5" r="4.3" fill="none" stroke="#ddd" stroke-width="1.2"/><path d="M8.5 8.5L11.5 11.5" stroke="#ddd" stroke-width="1.8"/></svg>
<div class="t" style="left:520px;top:635px;color:#8a8a8a;font-size:11.5px">Enter a layer name</div>
<div class="a" style="left:778px;top:632px;width:20px;height:20px;background:#2b2b2b;border:1px solid #222;border-radius:4px;"></div>
<svg style="left:782px;top:636px" width="12" height="12"><path d="M6 1v10M1 6h10" stroke="#eee" stroke-width="1.8"/></svg>
<svg style="left:793px;top:647px" width="4" height="4"><path d="M0 4H4V0Z" fill="#6fd3a5"/></svg>
<div class="a" style="left:822px;top:632px;width:20px;height:20px;background:#3c3c3c;border:1px solid #222;border-radius:4px;"></div>
<svg style="left:824px;top:634px" width="16" height="16"><circle cx="10.5" cy="5.5" r="4" fill="#d8d8d8"/><path d="M4 12A4 4 0 0 1 7 7" fill="none" stroke="#777" stroke-width="1.3"/><path d="M3 9A4 4 0 0 1 6 4.5" fill="none" stroke="#666" stroke-width="1"/></svg>
<div class="a" style="left:844px;top:632px;width:20px;height:20px;background:#2b2b2b;border:1px solid #222;border-radius:4px;"></div>
<svg style="left:847px;top:635px" width="14" height="14"><circle cx="2.5" cy="2.5" r="1" fill="#ccc"/><circle cx="8" cy="2.5" r="1" fill="#ccc"/><circle cx="2.5" cy="8" r="1" fill="#ccc"/><path d="M8 5.5v7M4.5 9h7" stroke="#ddd" stroke-width="1.5"/></svg>
<svg style="left:859px;top:647px" width="4" height="4"><path d="M0 4H4V0Z" fill="#6fd3a5"/></svg>
<div class="a" style="left:866px;top:632px;width:20px;height:20px;background:#2b2b2b;border:1px solid #222;border-radius:4px;"></div>
<svg style="left:868px;top:634px" width="16" height="16"><path d="M1.5 3h2M7 3h7M1.5 8h5M11 8h3.5M1.5 13h2M7 13h7" stroke="#ccc" stroke-width="1"/><circle cx="5.3" cy="3" r="1.6" fill="none" stroke="#ccc" stroke-width="1"/><circle cx="9" cy="8" r="1.6" fill="none" stroke="#ccc" stroke-width="1"/><circle cx="5.3" cy="13" r="1.6" fill="none" stroke="#ccc" stroke-width="1"/></svg>
<svg style="left:881px;top:647px" width="4" height="4"><path d="M0 4H4V0Z" fill="#6fd3a5"/></svg>
<div class="a" style="left:888px;top:632px;width:94px;height:19px;background:#262626;border-radius:3px"></div>
<div class="t" style="left:893px;top:635px;color:#555;">F</div>
<div class="t" style="left:905px;top:635px;color:#e0e0e0;">74</div>
<svg style="left:500px;top:657px" width="12" height="13"><rect x="1.5" y="5.5" width="8" height="6.5" fill="#cfcfcf"/><path d="M3 5.5V3.8A2.5 2.5 0 0 1 8 3.8V5.5" fill="none" stroke="#cfcfcf" stroke-width="1.4"/><circle cx="5.5" cy="8.8" r="0.9" fill="#444"/></svg>
<svg style="left:515px;top:658px" width="16" height="11"><path d="M2 5.5C4.5 0.8 11.5 0.8 14 5.5C11.5 10.2 4.5 10.2 2 5.5Z" fill="none" stroke="#cfcfcf" stroke-width="1"/><circle cx="8" cy="5.5" r="1.9" fill="#b8b8b8"/></svg>
<svg style="left:536px;top:656px" width="14" height="15"><path d="M7 1.5L12.5 4.5V10.5L7 13.5L1.5 10.5V4.5Z M1.5 4.5L7 7.5L12.5 4.5 M7 7.5V13.5" fill="none" stroke="#cfcfcf" stroke-width="1.1"/></svg>
<svg style="left:555px;top:657px" width="15" height="13"><path d="M1 4.5H3.5L7 1.5V11.5L3.5 8.5H1Z" fill="#cfcfcf"/><path d="M9 4A3 3 0 0 1 9 9M11 2.5A5.5 5.5 0 0 1 11 10.5" fill="none" stroke="#cfcfcf" stroke-width="1.1"/></svg>
<svg style="left:574px;top:656px" width="14" height="14"><path d="M1.5 12.5L8 6" stroke="#cfcfcf" stroke-width="1.2"/><path d="M7.5 4.5L10 2A1.5 1.5 0 0 1 12 4L9.5 6.5Z" fill="#cfcfcf"/><path d="M6.5 5L9 7.5" stroke="#cfcfcf" stroke-width="1.2"/></svg>
<svg style="left:593px;top:658px" width="15" height="11"><path d="M0.5 5.5L4 1H14.5V10H4Z" fill="#cfcfcf"/><circle cx="5" cy="5.5" r="1.5" fill="#444"/></svg>
<div class="t" style="left:649px;top:656px;color:#e6e6e6;">Name</div>
<div class="a" style="left:494px;top:673px;width:490px;height:290px;background:#2a2a2a;"></div>
<div class="a" style="left:494px;top:673px;width:474px;height:20px;background:#57533f;border-radius:0 4px 4px 0"></div>
<div class="a" style="left:496px;top:674px;width:19px;height:18px;background:#262626;border-radius:2px"></div>
<div class="a" style="left:516px;top:674px;width:18px;height:18px;background:#262626;border-radius:2px"></div>
<svg style="left:516px;top:678px" width="16" height="11"><path d="M2 5.5C4.5 0.8 11.5 0.8 14 5.5C11.5 10.2 4.5 10.2 2 5.5Z" fill="none" stroke="#cfcfcf" stroke-width="1"/><circle cx="8" cy="5.5" r="1.9" fill="#b8b8b8"/></svg>
<div class="a" style="left:535px;top:674px;width:17px;height:18px;background:#262626;border-radius:2px"></div>
<div class="a" style="left:573px;top:674px;width:16px;height:17px;background:#fce17a;border-radius:2px"></div>
<svg style="left:593px;top:678px" width="15" height="11"><path d="M0.5 5.5L4 1H14.5V10H4Z" fill="#cfcfcf"/><circle cx="5" cy="5.5" r="1.5" fill="#57533f"/></svg>
<svg style="left:648px;top:676px" width="14" height="14"><path d="M4 1.5h5M4 12.5h5M1.5 4v5M12.5 4v5" stroke="#e8d06a" stroke-width="1"/><rect x="0.5" y="0.5" width="2" height="2" fill="#eee"/><rect x="11.5" y="0.5" width="2" height="2" fill="#eee"/><rect x="0.5" y="11.5" width="2" height="2" fill="#eee"/><rect x="11.5" y="11.5" width="2" height="2" fill="#eee"/></svg>
<div class="t" style="left:667px;top:676px;color:#ececec;">Ellipse Shape</div>
<svg style="left:955px;top:678px" width="11" height="11"><circle cx="5.5" cy="5.5" r="4.5" fill="none" stroke="#888" stroke-width="1"/></svg>
<div class="a" style="left:969px;top:673px;width:15px;height:290px;background:#2a2a2a;"></div>
<div class="a" style="left:972px;top:673px;width:10px;height:287px;background:#4a4a4a;border-radius:5px"></div>
<div class="a" style="left:494px;top:963px;width:490px;height:13px;background:#2a2a2a;"></div>
<div class="a" style="left:496px;top:964px;width:473px;height:10px;background:#505050;border-radius:5px"></div>
<div class="a" style="left:970px;top:962px;width:14px;height:14px;background:#2e2e2e;"></div>
<div class="a" style="left:494px;top:976px;width:490px;height:22px;background:#3e3e3e;"></div>
<div class="a" style="left:497px;top:978px;width:20px;height:19px;background:#2b2b2b;border:1px solid #222;border-radius:4px;"></div>
<svg style="left:501px;top:982px" width="14" height="11"><path d="M0.5 5.5L4 1H13.5V10H4Z" fill="#ddd"/><circle cx="5" cy="5.5" r="1.5" fill="#333"/></svg>
<div class="t" style="left:520px;top:980px;color:#e6e6e6;">1 selected</div>
<div class="a" style="left:776px;top:977px;width:19px;height:20px;background:#2b2b2b;border:1px solid #222;border-radius:4px;"></div>
<svg style="left:779px;top:980px" width="13" height="13"><rect x="1.5" y="1.5" width="10" height="10" fill="none" stroke="#ccc" stroke-width="1.2"/><circle cx="6.5" cy="6.5" r="1.5" fill="#ccc"/></svg>
<div class="a" style="left:798px;top:978px;width:183px;height:18px;background:#585858;border-radius:4px"></div>
<div class="a" style="left:799px;top:979px;width:86px;height:16px;background:#262626;border-radius:3px"></div>
<svg style="left:805px;top:981px" width="13" height="12"><path d="M1 1.5h11M3.5 6h7M1 10.5h11" stroke="#3ccf6b" stroke-width="1.8"/></svg>
<div class="t" style="left:822px;top:980px;color:#e6e6e6;">Time Editor</div>
<svg style="left:893px;top:980px" width="14" height="14"><path d="M2.5 1v12M1 11.5h12" stroke="#bbb" stroke-width="1"/><path d="M3 11L12 4" stroke="#bbb" stroke-width="1"/></svg>
<div class="t" style="left:910px;top:980px;color:#e6e6e6;">Graph Editor</div>
<div class="a" style="left:988px;top:630px;width:926px;height:43px;background:#262626;"></div>
<div class="a" style="left:988px;top:630px;width:3px;height:23px;background:#262626;"></div>
<div class="a" style="left:1000px;top:646px;width:1px;height:8px;background:#8a8a8a;"></div>
<div class="t" style="left:979px;top:631px;color:#e8e8e8;width:40px;text-align:center;font-size:12px">0</div>
<div class="a" style="left:1011px;top:650px;width:1px;height:4px;background:#777;"></div>
<div class="a" style="left:1022px;top:650px;width:1px;height:4px;background:#777;"></div>
<div class="a" style="left:1033px;top:650px;width:1px;height:4px;background:#777;"></div>
<div class="a" style="left:1043px;top:650px;width:1px;height:4px;background:#777;"></div>
<div class="a" style="left:1054px;top:646px;width:1px;height:8px;background:#8a8a8a;"></div>
<div class="t" style="left:1033px;top:631px;color:#e8e8e8;width:40px;text-align:center;font-size:12px">15</div>
<div class="a" style="left:1065px;top:650px;width:1px;height:4px;background:#777;"></div>
<div class="a" style="left:1076px;top:650px;width:1px;height:4px;background:#777;"></div>
<div class="a" style="left:1087px;top:650px;width:1px;height:4px;background:#777;"></div>
<div class="a" style="left:1098px;top:650px;width:1px;height:4px;background:#777;"></div>
<div class="a" style="left:1109px;top:646px;width:1px;height:8px;background:#8a8a8a;"></div>
<div class="t" style="left:1088px;top:631px;color:#e8e8e8;width:40px;text-align:center;font-size:12px">30</div>
<div class="a" style="left:1119px;top:650px;width:1px;height:4px;background:#777;"></div>
<div class="a" style="left:1130px;top:650px;width:1px;height:4px;background:#777;"></div>
<div class="a" style="left:1141px;top:650px;width:1px;height:4px;background:#777;"></div>
<div class="a" style="left:1152px;top:650px;width:1px;height:4px;background:#777;"></div>
<div class="a" style="left:1163px;top:646px;width:1px;height:8px;background:#8a8a8a;"></div>
<div class="t" style="left:1142px;top:631px;color:#e8e8e8;width:40px;text-align:center;font-size:12px">45</div>
<div class="a" style="left:1174px;top:650px;width:1px;height:4px;background:#777;"></div>
<div class="a" style="left:1185px;top:650px;width:1px;height:4px;background:#777;"></div>
<div class="a" style="left:1195px;top:650px;width:1px;height:4px;background:#777;"></div>
<div class="a" style="left:1206px;top:650px;width:1px;height:4px;background:#777;"></div>
<div class="a" style="left:1217px;top:646px;width:1px;height:8px;background:#8a8a8a;"></div>
<div class="t" style="left:1196px;top:631px;color:#e8e8e8;width:40px;text-align:center;font-size:12px">60</div>
<div class="a" style="left:1228px;top:650px;width:1px;height:4px;background:#777;"></div>
<div class="a" style="left:1239px;top:650px;width:1px;height:4px;background:#777;"></div>
<div class="a" style="left:1250px;top:650px;width:1px;height:4px;background:#777;"></div>
<div class="a" style="left:1261px;top:650px;width:1px;height:4px;background:#777;"></div>
<div class="a" style="left:1272px;top:646px;width:1px;height:8px;background:#8a8a8a;"></div>
<div class="t" style="left:1251px;top:631px;color:#e8e8e8;width:40px;text-align:center;font-size:12px">75</div>
<div class="a" style="left:1282px;top:650px;width:1px;height:4px;background:#777;"></div>
<div class="a" style="left:1293px;top:650px;width:1px;height:4px;background:#777;"></div>
<div class="a" style="left:1304px;top:650px;width:1px;height:4px;background:#777;"></div>
<div class="a" style="left:1315px;top:650px;width:1px;height:4px;background:#777;"></div>
<div class="a" style="left:1326px;top:646px;width:1px;height:8px;background:#8a8a8a;"></div>
<div class="t" style="left:1305px;top:631px;color:#e8e8e8;width:40px;text-align:center;font-size:12px">90</div>
<div class="a" style="left:1337px;top:650px;width:1px;height:4px;background:#777;"></div>
<div class="a" style="left:1348px;top:650px;width:1px;height:4px;background:#777;"></div>
<div class="a" style="left:1358px;top:650px;width:1px;height:4px;background:#777;"></div>
<div class="a" style="left:1369px;top:650px;width:1px;height:4px;background:#777;"></div>
<div class="a" style="left:1380px;top:646px;width:1px;height:8px;background:#8a8a8a;"></div>
<div class="t" style="left:1359px;top:631px;color:#e8e8e8;width:40px;text-align:center;font-size:12px">105</div>
<div class="a" style="left:1391px;top:650px;width:1px;height:4px;background:#777;"></div>
<div class="a" style="left:1402px;top:650px;width:1px;height:4px;background:#777;"></div>
<div class="a" style="left:1413px;top:650px;width:1px;height:4px;background:#777;"></div>
<div class="a" style="left:1424px;top:650px;width:1px;height:4px;background:#777;"></div>
<div class="a" style="left:1434px;top:646px;width:1px;height:8px;background:#8a8a8a;"></div>
<div class="t" style="left:1413px;top:631px;color:#e8e8e8;width:40px;text-align:center;font-size:12px">120</div>
<div class="a" style="left:1445px;top:650px;width:1px;height:4px;background:#777;"></div>
<div class="a" style="left:1456px;top:650px;width:1px;height:4px;background:#777;"></div>
<div class="a" style="left:1467px;top:650px;width:1px;height:4px;background:#777;"></div>
<div class="a" style="left:1478px;top:650px;width:1px;height:4px;background:#777;"></div>
<div class="a" style="left:1489px;top:646px;width:1px;height:8px;background:#8a8a8a;"></div>
<div class="t" style="left:1468px;top:631px;color:#e8e8e8;width:40px;text-align:center;font-size:12px">135</div>
<div class="a" style="left:1500px;top:650px;width:1px;height:4px;background:#777;"></div>
<div class="a" style="left:1510px;top:650px;width:1px;height:4px;background:#777;"></div>
<div class="a" style="left:1521px;top:650px;width:1px;height:4px;background:#777;"></div>
<div class="a" style="left:1532px;top:650px;width:1px;height:4px;background:#777;"></div>
<div class="a" style="left:1543px;top:646px;width:1px;height:8px;background:#8a8a8a;"></div>
<div class="t" style="left:1522px;top:631px;color:#e8e8e8;width:40px;text-align:center;font-size:12px">150</div>
<div class="a" style="left:1554px;top:650px;width:1px;height:4px;background:#777;"></div>
<div class="a" style="left:1565px;top:650px;width:1px;height:4px;background:#777;"></div>
<div class="a" style="left:1576px;top:650px;width:1px;height:4px;background:#777;"></div>
<div class="a" style="left:1586px;top:650px;width:1px;height:4px;background:#777;"></div>
<div class="a" style="left:1597px;top:646px;width:1px;height:8px;background:#8a8a8a;"></div>
<div class="t" style="left:1576px;top:631px;color:#e8e8e8;width:40px;text-align:center;font-size:12px">165</div>
<div class="a" style="left:1608px;top:650px;width:1px;height:4px;background:#777;"></div>
<div class="a" style="left:1619px;top:650px;width:1px;height:4px;background:#777;"></div>
<div class="a" style="left:1630px;top:650px;width:1px;height:4px;background:#777;"></div>
<div class="a" style="left:1641px;top:650px;width:1px;height:4px;background:#777;"></div>
<div class="a" style="left:1652px;top:646px;width:1px;height:8px;background:#8a8a8a;"></div>
<div class="t" style="left:1631px;top:631px;color:#e8e8e8;width:40px;text-align:center;font-size:12px">180</div>
<div class="a" style="left:1662px;top:650px;width:1px;height:4px;background:#777;"></div>
<div class="a" style="left:1673px;top:650px;width:1px;height:4px;background:#777;"></div>
<div class="a" style="left:1684px;top:650px;width:1px;height:4px;background:#777;"></div>
<div class="a" style="left:1695px;top:650px;width:1px;height:4px;background:#777;"></div>
<div class="a" style="left:1706px;top:646px;width:1px;height:8px;background:#8a8a8a;"></div>
<div class="t" style="left:1685px;top:631px;color:#e8e8e8;width:40px;text-align:center;font-size:12px">195</div>
<div class="a" style="left:1717px;top:650px;width:1px;height:4px;background:#777;"></div>
<div class="a" style="left:1728px;top:650px;width:1px;height:4px;background:#777;"></div>
<div class="a" style="left:1738px;top:650px;width:1px;height:4px;background:#777;"></div>
<div class="a" style="left:1749px;top:650px;width:1px;height:4px;background:#777;"></div>
<div class="a" style="left:1760px;top:646px;width:1px;height:8px;background:#8a8a8a;"></div>
<div class="t" style="left:1739px;top:631px;color:#e8e8e8;width:40px;text-align:center;font-size:12px">210</div>
<div class="a" style="left:1771px;top:650px;width:1px;height:4px;background:#777;"></div>
<div class="a" style="left:1782px;top:650px;width:1px;height:4px;background:#777;"></div>
<div class="a" style="left:1793px;top:650px;width:1px;height:4px;background:#777;"></div>
<div class="a" style="left:1804px;top:650px;width:1px;height:4px;background:#777;"></div>
<div class="a" style="left:1814px;top:646px;width:1px;height:8px;background:#8a8a8a;"></div>
<div class="t" style="left:1793px;top:631px;color:#e8e8e8;width:40px;text-align:center;font-size:12px">225</div>
<div class="a" style="left:1825px;top:650px;width:1px;height:4px;background:#777;"></div>
<div class="a" style="left:1836px;top:650px;width:1px;height:4px;background:#777;"></div>
<div class="a" style="left:1847px;top:650px;width:1px;height:4px;background:#777;"></div>
<div class="a" style="left:1858px;top:650px;width:1px;height:4px;background:#777;"></div>
<div class="a" style="left:1869px;top:646px;width:1px;height:8px;background:#8a8a8a;"></div>
<div class="t" style="left:1848px;top:631px;color:#e8e8e8;width:40px;text-align:center;font-size:12px">240</div>
<div class="a" style="left:1880px;top:650px;width:1px;height:4px;background:#777;"></div>
<div class="a" style="left:1891px;top:650px;width:1px;height:4px;background:#777;"></div>
<div class="a" style="left:1901px;top:650px;width:1px;height:4px;background:#777;"></div>
<div class="a" style="left:1000px;top:654px;width:907px;height:17px;background:#474747;"></div>
<div class="a" style="left:995px;top:653px;width:5px;height:18px;background:#7fd1b9;border-radius:1px"></div>
<div class="a" style="left:1905px;top:653px;width:5px;height:18px;background:#7fd1b9;border-radius:1px"></div>
<div class="a" style="left:1905px;top:671px;width:9px;height:292px;background:#1f1f1f;"></div>
<div class="a" style="left:984px;top:630px;width:4px;height:333px;background:#2a2a2a;"></div>
<div class="a" style="left:988px;top:671px;width:12px;height:292px;background:#1f1f1f;"></div>
<div class="a" style="left:1000px;top:671px;width:914px;height:292px;background:#282828;"></div>
<div class="a" style="left:1000px;top:674px;width:905px;height:19px;border:1.3px solid #fff;border-radius:3px;background-color:#fbec82;background-image:radial-gradient(circle, rgba(200,170,40,0.55) 0.8px, transparent 1.1px);background-size:3px 3px"></div>
<div class="t" style="left:1008px;top:675px;color:#111;font-size:11.5px">Ellipse Shape</div>
<div class="a" style="left:1267px;top:652px;width:1.5px;height:311px;background:#5d9c88;"></div>
<svg style="left:1260px;top:643px" width="16" height="11"><path d="M0.5 0.5H15.5L8.5 9.5Q8 10.2 7.5 9.5Z" fill="#72cbb2"/></svg>
<div class="a" style="left:988px;top:963px;width:926px;height:13px;background:#2a2a2a;"></div>
<div class="a" style="left:991px;top:964px;width:922px;height:10px;background:#505050;border-radius:5px"></div>
<div class="a" style="left:991px;top:976px;width:923px;height:22px;background:#3e3e3e;"></div>
<div class="a" style="left:994px;top:978px;width:19px;height:19px;background:#262626;border:1px solid #222;border-radius:4px;"></div>
<svg style="left:996px;top:980px" width="15" height="15"><path d="M1 2h12" stroke="#ddd" stroke-width="1.6"/><path d="M1 7h2M5 7h8M1 12h3M7 12h2" stroke="#ddd" stroke-width="1.6"/></svg>
<svg style="left:1009px;top:993px" width="4" height="4"><path d="M0 4H4V0Z" fill="#6fd3a5"/></svg>
<div class="a" style="left:1015px;top:979px;width:150px;height:17px;background:#262626;border-radius:3px"></div>
<div class="t" style="left:1017px;top:980px;color:#e6e6e6;">Default Keyframe Layer</div>
<div class="a" style="left:1171px;top:979px;width:70px;height:16px;background:#2a2a2a;border-radius:3px"></div>
<div class="t" style="left:1176px;top:980px;color:#555;">F</div>
<div class="t" style="left:1188px;top:980px;color:#ccc;">-</div>
<div class="t" style="left:1247px;top:980px;color:#e0e0e0;">Align:</div>
<div class="a" style="left:1283px;top:977px;width:53px;height:20px;background:#262626;border-radius:4px"></div>
<div class="a" style="left:1284px;top:978px;width:17px;height:18px;background:#2e2e2e;border-radius:3px"></div>
<div class="a" style="left:1302px;top:978px;width:17px;height:18px;background:#2e2e2e;border-radius:3px"></div>
<div class="a" style="left:1320px;top:978px;width:17px;height:18px;background:#2e2e2e;border-radius:3px"></div>
<svg style="left:1284px;top:978px" width="53" height="18"><path d="M3 2.5v13" stroke="#ddd" stroke-width="1"/><path d="M5.5 6h1.5M9 6h3M5.5 11h1.5M9 11h5" stroke="#ddd" stroke-width="1.5"/><circle cx="6" cy="6" r="1" fill="#6fd3a5"/><circle cx="6" cy="11" r="1" fill="#6fd3a5"/><path d="M26.5 2.5v13" stroke="#ddd" stroke-width="1"/><path d="M21.5 6h3M28.5 6h3M20 11h3M30 11h3" stroke="#ddd" stroke-width="1.5"/><circle cx="26.5" cy="6" r="1" fill="#6fd3a5"/><circle cx="26.5" cy="11" r="1" fill="#6fd3a5"/><path d="M50 2.5v13" stroke="#ddd" stroke-width="1"/><path d="M42 6h3M39 11h5" stroke="#ddd" stroke-width="1.5"/><circle cx="47" cy="6" r="1" fill="#6fd3a5"/><circle cx="47" cy="11" r="1" fill="#6fd3a5"/></svg>
<div class="a" style="left:1340px;top:977px;width:18px;height:20px;background:#2b2b2b;border:1px solid #222;border-radius:4px;"></div>
<svg style="left:1342px;top:980px" width="14" height="14"><rect x="2" y="2" width="10" height="10" fill="none" stroke="#ccc" stroke-width="1"/><circle cx="7" cy="7" r="1" fill="#ccc"/><circle cx="2" cy="2" r="1.3" fill="#ccc"/><circle cx="12" cy="2" r="1.3" fill="#ccc"/><circle cx="2" cy="12" r="1.3" fill="#ccc"/><circle cx="12" cy="12" r="1.3" fill="#ccc"/></svg>
<div class="a" style="left:1361px;top:977px;width:32px;height:20px;background:#2b2b2b;border:1px solid #222;border-radius:4px;"></div>
<div class="a" style="left:1362px;top:978px;width:18px;height:18px;background:#3e3e3e;border-radius:3px 0 0 3px"></div>
<svg style="left:1362px;top:978px" width="18" height="18"><path d="M4 7A5 5 0 0 1 13.5 6L10.5 8A2 2 0 0 0 7 9L9 13.5L6.5 15Z" fill="none" stroke="#ddd" stroke-width="1.5"/></svg>
<div class="a" style="left:1380px;top:978px;width:1px;height:18px;background:#222;"></div>
<svg style="left:1384px;top:982px" width="8" height="10"><path d="M1 1L7 5L1 9z" fill="none" stroke="#999" stroke-width="1"/></svg>
<div class="a" style="left:1396px;top:977px;width:32px;height:20px;background:#2b2b2b;border:1px solid #222;border-radius:4px;"></div>
<svg style="left:1397px;top:978px" width="18" height="18"><path d="M1 9h4M13 9h4" stroke="#ddd" stroke-width="1"/><path d="M6 3v12M9 6v6M12 4v10" stroke="#ddd" stroke-width="1"/></svg>
<div class="a" style="left:1415px;top:978px;width:1px;height:18px;background:#222;"></div>
<svg style="left:1419px;top:982px" width="8" height="10"><path d="M1 1L7 5L1 9z" fill="none" stroke="#999" stroke-width="1"/></svg>
<svg style="left:1742px;top:980px" width="15" height="15"><circle cx="6" cy="6" r="5" fill="none" stroke="#ccc" stroke-width="1.1"/><path d="M3.5 6h5" stroke="#ccc" stroke-width="1.1"/><path d="M10 10l3 3" stroke="#ccc" stroke-width="1.5"/></svg>
<div class="a" style="left:1766px;top:985px;width:117px;height:4px;background:#3a3a3a;border-radius:2px"></div>
<svg style="left:1761px;top:981px" width="12" height="12"><circle cx="6" cy="6" r="5" fill="#5fbf9f"/><circle cx="6" cy="6" r="1.5" fill="#3e8d73"/></svg>
<svg style="left:1886px;top:980px" width="15" height="15"><circle cx="6" cy="6" r="5" fill="none" stroke="#ccc" stroke-width="1.1"/><path d="M3.5 6h5M6 3.5v5" stroke="#ccc" stroke-width="1.1"/><path d="M10 10l3 3" stroke="#ccc" stroke-width="1.5"/></svg>
<div class="a" style="left:986px;top:808px;width:1px;height:1.5px;background:#777;"></div>
<div class="a" style="left:986px;top:811px;width:1px;height:1.5px;background:#777;"></div>
<div class="a" style="left:986px;top:814px;width:1px;height:1.5px;background:#777;"></div>
<div class="a" style="left:986px;top:817px;width:1px;height:1.5px;background:#777;"></div>
<div class="a" style="left:986px;top:820px;width:1px;height:1.5px;background:#777;"></div>
<div class="a" style="left:986px;top:823px;width:1px;height:1.5px;background:#777;"></div>
<!-- STATUS -->
<div class="a" style="left:494px;top:1004px;width:1420px;height:22px;background:#3c3c3c;"></div>
<div class="a" style="left:498px;top:1009px;width:2px;height:2px;background:#888;"></div>
<div class="a" style="left:498px;top:1014px;width:2px;height:2px;background:#888;"></div>
<div class="a" style="left:498px;top:1019px;width:2px;height:2px;background:#888;"></div>
<div class="a" style="left:506px;top:1006px;width:19px;height:19px;background:#262626;border:1px solid #222;border-radius:4px;"></div>
<svg style="left:509px;top:1009px" width="13" height="13"><path d="M1 1h11v8H6l-3 3V9H1z" fill="#ddd"/><path d="M3 3.5h7M3 6h7" stroke="#333" stroke-width="1"/></svg>
<svg style="left:521px;top:1021px" width="4" height="4"><path d="M0 4H4V0Z" fill="#6fd3a5"/></svg>
<div class="a" style="left:528px;top:1008px;width:18px;height:14px;background:#e06868;border-radius:2px"></div>
<div class="t" style="left:533px;top:1008px;color:#2a2a2a;">0</div>
<div class="a" style="left:554px;top:1013px;width:6px;height:6px;background:#e06868;border-radius:50%"></div>
<div class="t" style="left:565px;top:1008px;color:#e6e6e6;font-size:11.5px">Save reminder: 47 minutes since your last save.</div>
<div class="a" style="left:1610px;top:1006px;width:80px;height:18px;background:#cbb66a;border-radius:2px"></div>
<div class="t" style="left:1616px;top:1008px;color:#2a2a2a;font-size:11.2px">Feedback</div>
<svg style="left:1670px;top:1008px" width="14" height="15"><path d="M1.5 1.5h8l3 3v9h-11z" fill="#f4f4f4" stroke="#5ac85a" stroke-width="1"/><path d="M4 12L11 5" stroke="#f08040" stroke-width="2.2"/></svg>
<div class="a" style="left:1693px;top:1006px;width:109px;height:18px;background:#33c76a;border-radius:2px"></div>
<div class="t" style="left:1699px;top:1008px;color:#1e1e1e;font-size:11.2px">Upgrade to Pro</div>
<svg style="left:1780px;top:1009px" width="16" height="13"><path d="M1 5C1 2 4 1 5.5 3L7 6L7 12H3z" fill="#f5c030"/><path d="M15 5C15 2 12 1 10.5 3L9 6L9 12H13z" fill="#f5c030"/></svg>
<div class="a" style="left:1805px;top:1006px;width:106px;height:18px;background:#3aa5ee;border-radius:2px"></div>
<div class="t" style="left:1811px;top:1008px;color:#10202e;font-size:11.2px">Tips and Tricks</div>
<svg style="left:1890px;top:1008px" width="15" height="15"><path d="M13.5 1.5C9 1.5 5.5 4 4 8.5L6.5 11C11 9.5 13.5 6 13.5 1.5Z" fill="#eee"/><circle cx="9.5" cy="5.5" r="1.3" fill="#3a8ad0"/><path d="M4.5 8L2 8.5L1.5 11L4 10zM7 11L6.5 13.5L4 14L5 11.5z" fill="#e05050"/><path d="M4.5 10.5L2 14" stroke="#f0a030" stroke-width="1.5"/></svg>
</body></html>
